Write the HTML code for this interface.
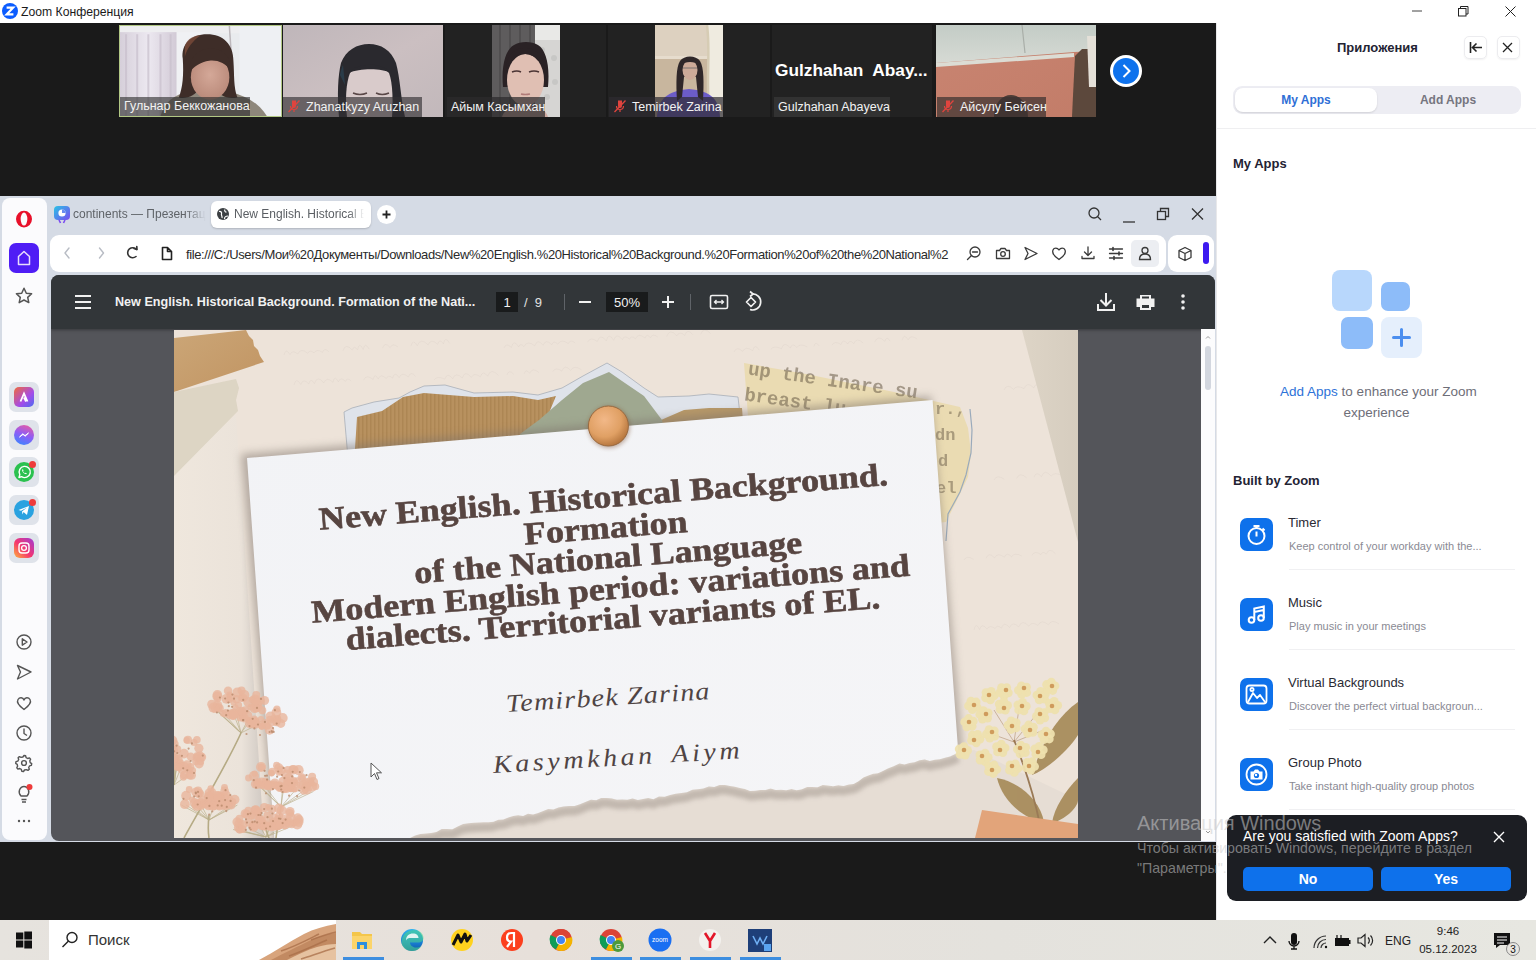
<!DOCTYPE html>
<html><head><meta charset="utf-8">
<style>
*{margin:0;padding:0;box-sizing:border-box}
html,body{width:1536px;height:960px;overflow:hidden;background:#1b1b1b;font-family:"Liberation Sans",sans-serif}
.a{position:absolute}
svg{position:absolute;overflow:visible}
#title{left:0;top:0;width:1536px;height:23px;background:#fff}
#dark{left:0;top:23px;width:1216px;height:173px;background:#1a1a1a}
#browser{left:0;top:196px;width:1216px;height:646px;background:#d5dbe5}
#bottomdark{left:0;top:842px;width:1216px;height:78px;background:#1a1a1a}
#panel{left:1216px;top:23px;width:320px;height:897px;background:#fff}
#taskbar{left:0;top:920px;width:1536px;height:40px;background:linear-gradient(90deg,#e6e3de 0%,#e7e0da 35%,#e4e2dd 65%,#e7e7e1 100%)}
.tile{position:absolute;top:26px;height:91px;background:#222;overflow:hidden}
.nm{position:absolute;left:2px;bottom:0;height:20px;background:rgba(40,40,40,.72);color:#f2f2f2;font-size:12.5px;line-height:20px;padding:0 4px;white-space:nowrap}
.mute{display:inline-block;width:14px;height:14px;vertical-align:-2px;margin-right:5px}
</style></head><body>
<!-- TITLE BAR -->
<div id="title" class="a">
  <div class="a" style="left:2px;top:3px;width:16px;height:16px;border-radius:50%;background:#0b5cff"></div>
  <svg style="left:2px;top:3px" width="16" height="16" viewBox="0 0 16 16"><path d="M4.6 4.6H11.2L4.6 11.4H11.4" fill="none" stroke="#fff" stroke-width="2.1" stroke-linejoin="miter"/></svg>
  <div class="a" style="left:21px;top:5px;font-size:12.2px;color:#1a1a1a;line-height:15px">Zoom Конференция</div>
  <svg style="left:1405px;top:0" width="120" height="23" viewBox="0 0 120 23">
    <path d="M7 11H17" stroke="#444" stroke-width="1"/>
    <rect x="53.5" y="8.5" width="7.5" height="7.5" fill="none" stroke="#222" stroke-width="1"/>
    <path d="M55.5 8.5V6.5H63V14H61" fill="none" stroke="#222" stroke-width="1"/>
    <path d="M100.5 6.5L110.5 16.5M110.5 6.5L100.5 16.5" stroke="#222" stroke-width="1"/>
  </svg>
</div>

<!-- DARK ZOOM STRIP -->
<div id="dark" class="a"></div>
<!-- tile1 -->
<div class="tile" style="left:119px;width:163px;top:25px;height:92px;background:#e8eaee;border:1px solid #b2c884">
 <svg style="left:0;top:0;filter:blur(.7px)" width="161" height="90" viewBox="0 0 159 88" preserveAspectRatio="none">
  <defs><linearGradient id="t1c" x1="0" x2="1"><stop offset="0" stop-color="#d6cfda"/><stop offset=".5" stop-color="#ece8f0"/><stop offset="1" stop-color="#d2cad6"/></linearGradient>
  <radialGradient id="t1f" cx=".5" cy=".45" r=".6"><stop offset="0" stop-color="#d4a898"/><stop offset="1" stop-color="#b88878"/></radialGradient></defs>
  <rect width="159" height="88" fill="#e9ebee"/>
  <rect x="0" y="0" width="159" height="7" fill="#eeeef0"/>
  <rect x="0" y="6" width="56" height="82" fill="url(#t1c)"/>
  <g stroke="#c8bfcc" stroke-width="2" opacity=".7"><path d="M6 8V88M17 8V88M28 8V88M40 8V88M50 8V88"/></g>
  <rect x="56" y="6" width="28" height="82" fill="#f0f1f4"/>
  <rect x="118" y="0" width="41" height="88" fill="#eef0f3"/>
  <path d="M108 0L114 88" stroke="#bdb8bc" stroke-width="1.5"/>
  <path d="M40 88C45 70 60 63 85 62C115 62 135 72 145 88Z" fill="#8e877b"/>
  <path d="M62 32C60 18 70 8 86 8C102 8 112 18 112 34C113 48 112 60 116 70C105 72 98 68 95 60L80 60C74 68 66 72 58 70C62 60 63 48 62 32Z" fill="#3e2d28"/>
  <path d="M64 20C66 12 74 9 80 9C72 14 66 22 64 30Z" fill="#7a4a38" opacity=".8"/>
  <ellipse cx="89" cy="50" rx="19" ry="22" fill="url(#t1f)"/>
  <path d="M68 46C68 30 78 22 90 22C102 22 110 30 110 44C104 36 96 33 88 34C80 35 72 40 68 46Z" fill="#3e2d28"/>
 </svg>
 <div class="nm" style="left:0;width:130px;height:19px;line-height:19px;background:rgba(45,45,45,.62)">Гульнар Беккожанова</div>
</div>
<!-- tile2 -->
<div class="tile" style="left:283px;width:160px;top:25px;height:92px;background:#c4b9bc">
 <svg style="left:0;top:0;filter:blur(.7px)" width="160" height="92" viewBox="0 0 160 92">
  <defs><linearGradient id="t2b" x1="0" y1="0" x2="1" y2="1"><stop offset="0" stop-color="#bfb6ba"/><stop offset=".5" stop-color="#cbbfc1"/><stop offset="1" stop-color="#c2b8bb"/></linearGradient></defs>
  <rect width="160" height="92" fill="url(#t2b)"/>
  <path d="M56 92C54 70 55 50 58 38C63 25 74 19 86 19C98 19 108 25 113 38C117 52 118 75 122 92Z" fill="#2a292e"/>
  <path d="M57 50C58 45 59 42 60 40L62 60Z" fill="#2c4a5c" opacity=".6"/>
  <path d="M64 92C62 75 63 58 67 48C74 41 98 40 106 48C110 58 110 78 109 92Z" fill="#d9cbcb"/>
  <path d="M66 48C72 38 100 36 107 48C100 43 76 43 66 48Z" fill="#2a292e"/>
  <path d="M70 68Q77 71 84 68M93 68Q99 71 106 68" stroke="#5a4848" stroke-width="1.4" fill="none"/>
 </svg>
 <div class="nm" style="left:0;width:139px;height:20px;background:rgba(50,48,50,.65)"><svg class="mute" style="position:relative;display:inline-block" width="14" height="14" viewBox="0 0 14 14"><path d="M5 1.5h4v5.5a2 2 0 0 1-4 0z" fill="#e0443e"/><path d="M3.5 7a3.5 3.5 0 0 0 7 0M7 10.5V13" stroke="#e0443e" fill="none" stroke-width="1.2"/><path d="M1.5 13L12.5 1.5" stroke="#e0443e" stroke-width="1.3"/></svg>Zhanatkyzy Aruzhan</div>
</div>
<!-- tile3 -->
<div class="tile" style="left:445px;width:161px;top:25px;height:92px;background:#222">
 <svg style="left:47px;top:0;filter:blur(.6px)" width="68" height="92" viewBox="0 0 68 92">
  <rect width="68" height="92" fill="#d6d5d3"/>
  <rect x="0" y="0" width="43" height="92" fill="#5e5c5d"/>
  <g stroke="#4e4c4d" stroke-width="2" opacity=".8"><path d="M8 0V92M18 0V92M28 0V92M38 0V92"/></g>
  <rect x="43" y="0" width="25" height="15" fill="#e9e9e7"/>
  <g fill="#c2c2c0" opacity=".7"><circle cx="50" cy="25" r="3"/><circle cx="62" cy="33" r="3"/><circle cx="52" cy="45" r="3"/><circle cx="63" cy="57" r="3"/><circle cx="55" cy="72" r="3"/></g>
  <path d="M11 62C9 40 14 24 22 20C28 16 40 16 46 20C54 25 58 40 56 62Z" fill="#2a2225"/>
  <ellipse cx="33.5" cy="55" rx="18.5" ry="26" fill="#e0bfb3"/>
  <path d="M14 46C14 30 22 23 33 23C44 23 52 30 53 46C50 36 44 30 33 29C22 30 17 36 14 46Z" fill="#2a2225"/>
  <path d="M20 47Q25 45 29 47M37 47Q42 45 47 47" stroke="#4a3434" stroke-width="1.6" fill="none"/>
  <path d="M29 69Q33 70 38 69" stroke="#b07b78" stroke-width="1.5" fill="none"/>
  <path d="M10 92C12 84 22 80 33 80C44 80 54 84 56 92Z" fill="#cfaba2"/>
 </svg>
 <div class="nm" style="left:2px;width:98px;height:20px;background:rgba(45,43,45,.72)">Айым Касымхан</div>
</div>
<!-- tile4 -->
<div class="tile" style="left:608px;width:162px;top:25px;height:92px;background:#222">
 <svg style="left:47px;top:0;filter:blur(.6px)" width="68" height="92" viewBox="0 0 68 92">
  <rect width="68" height="92" fill="#ddd1c0"/>
  <rect x="0" y="33" width="68" height="59" fill="#c8b69e"/>
  <rect x="0" y="31" width="68" height="3" fill="#e6dccd"/>
  <rect x="53" y="0" width="15" height="92" fill="#efebe0"/>
  <path d="M52 0C56 30 50 60 55 92" stroke="#d6ccb4" stroke-width="2.5" fill="none"/>
  <path d="M2 92C3 74 12 66 34 64C56 66 64 74 65 92Z" fill="#6c5cc8"/>
  <path d="M22 76C21 58 21 42 25 36C29 30 41 30 45 36C49 42 49 58 48 76L43 72L41 52L29 52L27 72Z" fill="#2f2729"/>
  <ellipse cx="35" cy="45" rx="7.5" ry="10" fill="#cdaa98"/>
  <path d="M26 40C28 32 42 31 44 40C40 36 30 36 26 40Z" fill="#2f2729"/>
  <path d="M28 43H42" stroke="#666" stroke-width=".8"/>
 </svg>
 <div class="nm" style="left:1px;width:114px;height:20px;background:rgba(45,43,48,.7)"><svg class="mute" style="position:relative;display:inline-block" width="14" height="14" viewBox="0 0 14 14"><path d="M5 1.5h4v5.5a2 2 0 0 1-4 0z" fill="#e0443e"/><path d="M3.5 7a3.5 3.5 0 0 0 7 0M7 10.5V13" stroke="#e0443e" fill="none" stroke-width="1.2"/><path d="M1.5 13L12.5 1.5" stroke="#e0443e" stroke-width="1.3"/></svg>Temirbek Zarina</div>
</div>
<!-- tile5 -->
<div class="tile" style="left:772px;width:160px;top:25px;height:92px;background:#222">
  <div class="a" style="left:3px;top:35px;width:160px;font-size:17.3px;font-weight:bold;color:#fff;white-space:nowrap">Gulzhahan&nbsp; Abay...</div>
  <div class="nm" style="left:2px;width:116px;height:20px;background:rgba(52,52,52,.9)">Gulzhahan Abayeva</div>
</div>
<!-- tile6 -->
<div class="tile" style="left:936px;width:160px;top:25px;height:92px;background:#c8836f">
 <svg style="left:0;top:0;filter:blur(.7px)" width="160" height="92" viewBox="0 0 160 92">
  <defs><linearGradient id="t6w" x1="0" y1="0" x2="1" y2="1"><stop offset="0" stop-color="#c98572"/><stop offset="1" stop-color="#c27c68"/></linearGradient>
  <linearGradient id="t6c" x1="0" y1="0" x2="0" y2="1"><stop offset="0" stop-color="#c3ccc6"/><stop offset="1" stop-color="#d6dad4"/></linearGradient></defs>
  <rect width="160" height="92" fill="url(#t6w)"/>
  <path d="M0 0H160V26L138 27L0 38Z" fill="url(#t6c)"/>
  <path d="M0 38L138 28L138 32L0 42Z" fill="#dcdcd4"/>
  <path d="M86 0L89 28" stroke="#a9aea8" stroke-width="1.2"/>
  <path d="M139 31L146 24H160V92H136C137 70 138 50 139 31Z" fill="#5c483c"/>
  <path d="M151 11H160V62H153Z" fill="#e4e0d8"/>
  <path d="M58 92C58 78 66 70 75 70C84 70 92 78 92 92Z" fill="#4c3c36"/>
 </svg>
 <div class="nm" style="left:1px;width:109px;height:20px;background:rgba(60,50,48,.72)"><svg class="mute" style="position:relative;display:inline-block" width="14" height="14" viewBox="0 0 14 14"><path d="M5 1.5h4v5.5a2 2 0 0 1-4 0z" fill="#e0443e"/><path d="M3.5 7a3.5 3.5 0 0 0 7 0M7 10.5V13" stroke="#e0443e" fill="none" stroke-width="1.2"/><path d="M1.5 13L12.5 1.5" stroke="#e0443e" stroke-width="1.3"/></svg>Айсулу Бейсен</div>
</div>
<!-- next btn -->
<div class="a" style="left:1110px;top:55px;width:32px;height:32px;border-radius:50%;background:#fff"></div>
<div class="a" style="left:1113px;top:58px;width:26px;height:26px;border-radius:50%;background:#0e72ed"></div>
<svg style="left:1110px;top:55px" width="32" height="32" viewBox="0 0 32 32"><path d="M13.5 10L19.5 16L13.5 22" fill="none" stroke="#fff" stroke-width="2"/></svg>

<!-- BROWSER -->
<div id="browser" class="a"></div>
<!-- sidebar -->
<div class="a" style="left:2px;top:198px;width:45px;height:642px;background:#fbfbfd;border-radius:8px"></div>
<svg style="left:14px;top:209px" width="20" height="20" viewBox="0 0 20 20"><path d="M10 1.8A8 8.3 0 1 1 10 18.4A8 8.3 0 1 1 10 1.8ZM10 3.6A3.3 6.4 0 1 0 10 16.6A3.3 6.4 0 1 0 10 3.6Z" fill="#e8102a" fill-rule="evenodd"/></svg>
<div class="a" style="left:9px;top:243px;width:30px;height:30px;border-radius:7px;background:#4f1df5"></div>
<svg style="left:9px;top:243px" width="30" height="30" viewBox="0 0 30 30"><path d="M9.5 21.5V13.5L15 8.5L20.5 13.5V21.5Z" fill="none" stroke="#e8defc" stroke-width="1.5" stroke-linejoin="round"/></svg>
<svg style="left:14px;top:286px" width="20" height="20" viewBox="0 0 20 20"><path d="M10 2.3l2.3 4.9 5.3.6-3.9 3.6 1.1 5.2L10 14l-4.8 2.6 1.1-5.2-3.9-3.6 5.3-.6z" fill="none" stroke="#555" stroke-width="1.5" stroke-linejoin="round"/></svg>
<!-- app icons -->
<div class="a" style="left:9px;top:382px;width:30px;height:30px;border-radius:7px;background:#dfe3ea"></div>
<div class="a" style="left:14px;top:387px;width:20px;height:20px;border-radius:5px;background:linear-gradient(135deg,#f06a3a,#a44be8 60%,#4a6cf0)"></div>
<svg style="left:14px;top:387px" width="20" height="20" viewBox="0 0 20 20"><path d="M6.5 14.5L10 6.5L13.5 14.5M10 10.5L12 14.5" fill="none" stroke="#fff" stroke-width="1.8"/></svg>
<div class="a" style="left:9px;top:420px;width:30px;height:30px;border-radius:7px;background:#dfe3ea"></div>
<div class="a" style="left:14px;top:425px;width:20px;height:20px;border-radius:50%;background:linear-gradient(200deg,#f35c9a,#8d5cf6 50%,#2f8cff)"></div>
<svg style="left:14px;top:425px" width="20" height="20" viewBox="0 0 20 20"><path d="M5.5 12L8.8 8.8L11 10.6L14.5 8L11.2 11.2L9 9.4Z" fill="#fff" stroke="#fff" stroke-width="1"/></svg>
<div class="a" style="left:9px;top:457px;width:30px;height:30px;border-radius:7px;background:#dfe3ea"></div>
<div class="a" style="left:14px;top:462px;width:20px;height:20px;border-radius:50%;background:#2bc14f"></div>
<svg style="left:14px;top:462px" width="20" height="20" viewBox="0 0 20 20"><path d="M5 15.5L5.8 12.6A5.6 5.6 0 1 1 7.6 14.6Z" fill="none" stroke="#fff" stroke-width="1.4" stroke-linejoin="round"/><path d="M8 7.8C8 10 10 12.2 12.3 12.3L12.8 11.3L11.6 10.7L11 11.2C10.2 10.8 9.4 10 9 9.2L9.5 8.6L9 7.3Z" fill="#fff"/></svg>
<div class="a" style="left:29px;top:461px;width:7px;height:7px;border-radius:50%;background:#ee3b3b"></div>
<div class="a" style="left:9px;top:495px;width:30px;height:30px;border-radius:7px;background:#dfe3ea"></div>
<div class="a" style="left:14px;top:500px;width:20px;height:20px;border-radius:50%;background:#2aa2e0"></div>
<svg style="left:14px;top:500px" width="20" height="20" viewBox="0 0 20 20"><path d="M4.5 10L15 6L13 15L9.5 12L8.5 14.5L8 11.5L13 7.5L7 10.8Z" fill="#fff"/></svg>
<div class="a" style="left:29px;top:499px;width:7px;height:7px;border-radius:50%;background:#ee3b3b"></div>
<div class="a" style="left:9px;top:533px;width:30px;height:30px;border-radius:7px;background:#dfe3ea"></div>
<div class="a" style="left:14px;top:538px;width:20px;height:20px;border-radius:6px;background:linear-gradient(45deg,#fdb33b,#f5366d 45%,#a03bd6)"></div>
<svg style="left:14px;top:538px" width="20" height="20" viewBox="0 0 20 20"><rect x="5" y="5" width="10" height="10" rx="3" fill="none" stroke="#fff" stroke-width="1.4"/><circle cx="10" cy="10" r="2.4" fill="none" stroke="#fff" stroke-width="1.3"/></svg>
<!-- bottom sidebar icons -->
<svg style="left:14px;top:632px" width="20" height="200" viewBox="0 0 20 200">
 <g fill="none" stroke="#555" stroke-width="1.4" stroke-linejoin="round">
  <circle cx="10" cy="10" r="7"/><path d="M8.3 6.8L13 10L8.3 13.2Z"/>
  <path d="M3.5 33.5L17 40L3.5 47L6.5 40Z"/>
  <path d="M10 77.5C4 73 2.5 70 4 67.5C5.5 65 9 65 10 68C11 65 14.5 65 16 67.5C17.5 70 16 73 10 77.5Z"/>
  <circle cx="10" cy="101" r="7"/><path d="M10 96.5V101.5L13 103.5"/>
  <circle cx="10" cy="131" r="2.4"/><path d="M10 123.5l1.6.3.5 1.8 1.6.9 1.8-.6 1.1 1.3-.8 1.7.4 1.8 1.5 1-.3 1.7-1.8.5-.9 1.6.6 1.8-1.3 1.1-1.7-.8-1.8.4-1 1.5-1.7-.3-.5-1.8-1.6-.9-1.8.6-1.1-1.3.8-1.7-.4-1.8-1.5-1 .3-1.7 1.8-.5.9-1.6-.6-1.8 1.3-1.1 1.7.8 1.8-.4z"/>
  <path d="M7.5 167.5H12.5M8 170H12M7 164C5 162 5 159.5 5.5 158C6.5 155.5 8 154.5 10 154.5C12 154.5 13.5 155.5 14.5 158C15 159.5 15 162 13 164Z"/>
 </g>
 <circle cx="15.5" cy="155" r="3" fill="#ee3b3b"/>
 <g fill="#555"><circle cx="5" cy="189" r="1.2"/><circle cx="10" cy="189" r="1.2"/><circle cx="15" cy="189" r="1.2"/></g>
</svg>
<!-- tabs -->
<div class="a" style="left:54px;top:206px;width:16px;height:14px;border-radius:4px;background:linear-gradient(135deg,#28c3e6,#7b4cf0)"></div>
<svg style="left:54px;top:206px" width="16" height="18" viewBox="0 0 16 18"><circle cx="8" cy="7" r="3.6" fill="#fff"/><path d="M8 7V3.4A3.6 3.6 0 0 1 11.6 7Z" fill="#6a8cf0"/><path d="M5 14L6.5 17M11 14L9.5 17" stroke="#7b4cf0" stroke-width="1.6"/></svg>
<div class="a" style="left:73px;top:207px;width:133px;height:16px;overflow:hidden;white-space:nowrap;font-size:12px;color:#5f6368;-webkit-mask-image:linear-gradient(90deg,#000 85%,transparent)">continents — Презентация</div>
<div class="a" style="left:211px;top:201px;width:160px;height:27px;border-radius:6px;background:#fff;box-shadow:0 1px 2px rgba(0,0,0,.18)"></div>
<svg style="left:216px;top:207px" width="14" height="14" viewBox="0 0 14 14"><circle cx="7" cy="7" r="6" fill="#3c4043"/><path d="M3 4.5C5 4 6 5.5 5.5 7C5 8.5 6.5 9 6 11M9 2.5C8 4 9.5 5 10.5 5.2M8.5 12C8.5 10 9.5 9 12 9" fill="none" stroke="#fff" stroke-width="1.2"/></svg>
<div class="a" style="left:234px;top:207px;width:130px;height:16px;overflow:hidden;white-space:nowrap;font-size:12px;color:#5a5e63;-webkit-mask-image:linear-gradient(90deg,#000 88%,transparent)">New English. Historical Background</div>
<div class="a" style="left:377px;top:205px;width:19px;height:19px;border-radius:50%;background:#fff"></div>
<svg style="left:377px;top:205px" width="19" height="19" viewBox="0 0 19 19"><path d="M9.5 5.5V13.5M5.5 9.5H13.5" stroke="#222" stroke-width="1.8"/></svg>
<!-- browser window controls -->
<svg style="left:1080px;top:200px" width="130" height="30" viewBox="0 0 130 30">
 <g fill="none" stroke="#333" stroke-width="1.3">
  <circle cx="14" cy="13" r="5"/><path d="M17.5 16.5L21 20"/>
  <path d="M43 22H55"/>
  <rect x="77.5" y="11.5" width="8" height="8"/><path d="M80.5 11.5V8.5H88.5V16.5H85.5"/>
  <path d="M112 8.5L123 19.5M123 8.5L112 19.5"/>
 </g>
</svg>
<!-- address bar -->
<div class="a" style="left:50px;top:235px;width:1116px;height:37px;border-radius:9px;background:#fff"></div>
<div class="a" style="left:1168px;top:235px;width:46px;height:37px;border-radius:9px;background:#fff"></div>
<svg style="left:55px;top:238px" width="140" height="30" viewBox="0 0 140 30">
 <g fill="none" stroke-width="1.4" stroke-linejoin="round" stroke-linecap="round">
  <path d="M14 10L10 15L14 20" stroke="#b8bcc4"/>
  <path d="M44.5 10L48.5 15L44.5 20" stroke="#b8bcc4"/>
  <path d="M81.5 11.5A5 5 0 1 0 81 18.5" stroke="#333" stroke-width="1.6"/>
  <path d="M79 10.5L82 11.5L81.8 8.5" stroke="#333" stroke-width="1.6"/>
  <path d="M107.5 9.5H112.5L116.5 13.5V21.5H107.5Z M112.5 9.5V13.5H116.5" stroke="#222" stroke-width="1.6"/>
 </g>
</svg>
<div class="a" style="left:186px;top:246.5px;font-size:13px;color:#2a2a2a;white-space:nowrap;letter-spacing:-0.4px">file:///C:/Users/Мои%20Документы/Downloads/New%20English.%20Historical%20Background.%20Formation%20of%20the%20National%2</div>
<svg style="left:960px;top:238px" width="260" height="30" viewBox="0 0 260 30">
 <g fill="none" stroke="#3a3a3a" stroke-width="1.3" stroke-linejoin="round" stroke-linecap="round">
  <circle cx="15" cy="14" r="5"/><path d="M12.5 14H17.5M11.5 17.5L7.5 21.5"/>
  <path d="M36.5 12.5H39.5L41 10.5H45L46.5 12.5H49.5V20.5H36.5Z"/><circle cx="43" cy="16" r="2.3"/>
  <path d="M65 9.5L77 15.5L65 21.5L68 15.5Z"/>
  <path d="M99 21.5C93 17.5 92 14.5 93 12C94 9.5 97.5 9.5 99 12C100.5 9.5 104 9.5 105 12C106 14.5 105 17.5 99 21.5Z"/>
  <path d="M128 9V17M124.5 14L128 17.5L131.5 14M122 18.5V20.5H134V18.5"/>
  <path d="M149.5 11H162.5M149.5 15.5H162.5M149.5 20H162.5"/><path d="M153 9.5V12.5M159 14V17M154 18.5V21.5" stroke-width="1.6"/>
 </g>
</svg>
<div class="a" style="left:1131px;top:240px;width:28px;height:27px;border-radius:5px;background:#eceef2"></div>
<svg style="left:1131px;top:240px" width="28" height="27" viewBox="0 0 28 27"><g fill="none" stroke="#3a3a3a" stroke-width="1.3"><circle cx="14" cy="10.5" r="3"/><path d="M8.5 19.5C8.5 15.5 11 14 14 14C17 14 19.5 15.5 19.5 19.5Z"/></g></svg>
<svg style="left:1174px;top:243px" width="22" height="22" viewBox="0 0 22 22"><g fill="none" stroke="#3a3a3a" stroke-width="1.3" stroke-linejoin="round"><path d="M11 4.5L17 7.5V14.5L11 17.5L5 14.5V7.5Z M5 7.5L11 10.5L17 7.5M11 10.5V17.5"/></g></svg>
<div class="a" style="left:1203px;top:242px;width:6px;height:22px;border-radius:3px;background:#3d1af0"></div>

<!-- PDF -->
<div class="a" style="left:51px;top:275px;width:1164px;height:566px;border-radius:8px 8px 0 8px;background:#54555a;overflow:hidden">
  <div class="a" style="left:0;top:0;width:1164px;height:54px;background:#323639;box-shadow:0 1px 3px rgba(0,0,0,.35)"></div>
</div>
<svg style="left:51px;top:275px" width="1164" height="54" viewBox="0 0 1164 54">
 <g fill="none" stroke="#f1f1f1" stroke-width="2">
  <path d="M24 21H40M24 27H40M24 33H40"/>
 </g>
</svg>
<div class="a" style="left:115px;top:295px;font-size:12.6px;font-weight:bold;color:#f1f1f1;white-space:nowrap">New English. Historical Background. Formation of the Nati...</div>
<div class="a" style="left:496px;top:292px;width:22px;height:20px;background:#191b1c"></div>
<div class="a" style="left:496px;top:295px;width:22px;text-align:center;font-size:13px;color:#f1f1f1">1</div>
<div class="a" style="left:524px;top:295px;font-size:13px;color:#e1e1e1;white-space:nowrap">/&nbsp; 9</div>
<div class="a" style="left:564px;top:294px;width:1px;height:16px;background:#5f6368"></div>
<div class="a" style="left:690px;top:294px;width:1px;height:16px;background:#5f6368"></div>
<div class="a" style="left:606px;top:292px;width:42px;height:20px;background:#191b1c"></div>
<div class="a" style="left:606px;top:295px;width:42px;text-align:center;font-size:13px;color:#f1f1f1">50%</div>
<svg style="left:570px;top:285px" width="200" height="34" viewBox="0 0 200 34">
 <g fill="none" stroke="#f1f1f1" stroke-width="2">
  <path d="M9 17H21"/>
  <path d="M92 17H104M98 11V23"/>
  <rect x="140.5" y="10.5" width="17" height="13" rx="1.5" stroke-width="1.6"/>
  <path d="M145 17H153M146.5 15L144.5 17L146.5 19M151.5 15L153.5 17L151.5 19" stroke-width="1.3"/>
 </g>
 <g fill="none" stroke="#f1f1f1" stroke-width="1.7" stroke-linejoin="round">
  <path d="M176.5 17L181 12.5L185.5 17L181 21.5Z"/>
  <path d="M182 9A8 8 0 1 1 180 24.5"/>
  <path d="M180 6.5L183 9L180 11.5"/>
 </g>
</svg>
<svg style="left:1090px;top:285px" width="110" height="34" viewBox="0 0 110 34">
 <g fill="none" stroke="#f1f1f1" stroke-width="2">
  <path d="M16 8V20M10.5 15L16 20.5L21.5 15M8 19V25H24V19"/>
 </g>
 <path d="M50 10H61V13.5H64.5V22H61V25H50V22H46.5V13.5H50Z M52 20V23H59V20Z M52 11.5V13.5H59V11.5Z" fill="#f1f1f1" fill-rule="evenodd"/>
 <g fill="#f1f1f1"><circle cx="93" cy="11" r="1.8"/><circle cx="93" cy="17" r="1.8"/><circle cx="93" cy="23" r="1.8"/></g>
</svg>
<!-- scrollbar -->
<div class="a" style="left:1201px;top:329px;width:14px;height:512px;background:#fcfcfd"></div>
<div class="a" style="left:1205px;top:346px;width:6px;height:44px;border-radius:3px;background:#d3d7df"></div>
<svg style="left:1201px;top:330px" width="14" height="511" viewBox="0 0 14 511"><path d="M5 8.5L7 6.5L9 8.5M5 501L7 503L9 501" fill="none" stroke="#999" stroke-width="1"/></svg>
<!-- SLIDE -->
<div id="slide" class="a" style="left:174px;top:330px;width:904px;height:508px;background:#ede3d9;overflow:hidden">
<svg style="left:0;top:0" width="904" height="508" viewBox="0 0 904 508">
 <defs>
  <linearGradient id="gR" x1="0" y1="0" x2="1" y2="0"><stop offset="0" stop-color="#ddd4c6"/><stop offset="1" stop-color="#d6cdbf"/></linearGradient>
  <linearGradient id="gL" x1="0" y1="0" x2="1" y2="0"><stop offset="0" stop-color="#efe7dd"/><stop offset=".75" stop-color="#ebe3da"/><stop offset="1" stop-color="#cfc8c2"/></linearGradient>
  <linearGradient id="gTape" x1="0" y1="0" x2="1" y2="1"><stop offset="0" stop-color="#cba677"/><stop offset="1" stop-color="#c19462"/></linearGradient>
  <pattern id="pStripe" width="4" height="10" patternUnits="userSpaceOnUse"><rect width="4" height="10" fill="#b8915f"/><rect width="1.5" height="10" fill="#a88250" opacity=".7"/></pattern><linearGradient id="gBrown" x1="0" y1="0" x2="0" y2="1"><stop offset="0" stop-color="#bd9866"/><stop offset="1" stop-color="#ab8656"/></linearGradient>
  <radialGradient id="gPin" cx=".4" cy=".35" r=".7"><stop offset="0" stop-color="#f2b888"/><stop offset=".6" stop-color="#e0a064"/><stop offset="1" stop-color="#b07038"/></radialGradient>
  <linearGradient id="gNote" x1="0" y1="0" x2="1" y2="1"><stop offset="0" stop-color="#f2f3f6"/><stop offset="1" stop-color="#f5f5f7"/></linearGradient>
  <linearGradient id="gShadow" x1="0" y1="0" x2="0" y2="1"><stop offset="0" stop-color="#b9b0a8"/><stop offset=".45" stop-color="#d9d0c7"/><stop offset="1" stop-color="#e8dfd6"/></linearGradient>
  <filter id="blur2"><feGaussianBlur stdDeviation="2"/></filter>
  <filter id="blur4"><feGaussianBlur stdDeviation="4"/></filter>
 </defs>
<!--SCRIB--><path d="M110.0 25.0 Q111.8 17.4 116.0 24.6 Q118.3 19.3 123.8 24.0 Q126.8 17.3 133.7 23.3 Q135.6 19.2 140.1 22.9 Q142.6 18.4 148.5 22.3 Q150.5 17.0 154.9 21.9 M168.9 20.9 Q171.7 12.3 178.3 20.2 Q179.8 14.5 183.5 19.9 Q185.2 11.0 189.2 19.5 Q190.9 11.3 195.1 19.1 M208.5 18.1 Q210.8 11.2 216.2 17.6 Q218.5 12.5 224.0 17.0 M236.9 16.1 Q238.9 8.1 243.3 15.7 Q246.6 7.0 254.1 14.9 Q257.0 7.8 263.7 14.3 Q265.4 7.8 269.4 13.9 Q271.3 5.1 275.6 13.4" fill="none" stroke="#8a7a70" stroke-width=".8" opacity=".08"/>
<path d="M330.0 18.0 Q332.2 12.0 337.4 17.5 Q339.6 8.4 344.7 17.0 Q346.3 12.4 349.9 16.6 Q353.2 9.9 360.8 15.8 Q363.3 7.9 369.1 15.3 Q371.7 8.3 377.7 14.7 Q379.6 9.7 383.8 14.2 Q387.0 8.3 394.3 13.5 Q396.4 8.8 401.2 13.0 M413.6 12.2 Q416.5 6.1 423.3 11.5 Q426.0 2.8 432.3 10.8 Q434.5 1.7 439.7 10.3 Q442.3 1.7 448.3 9.7 Q450.4 4.3 455.5 9.2 Q457.3 4.8 461.5 8.8 Q464.3 2.2 471.1 8.1 Q472.7 2.7 476.4 7.8 Q478.6 2.8 483.9 7.2 M492.6 6.6 Q495.7 -2.5 502.9 5.9 Q505.3 0.5 510.8 5.4 Q513.2 -2.5 518.9 4.8 M526.6 4.3 Q529.6 -3.9 536.6 3.6" fill="none" stroke="#8a7a70" stroke-width=".8" opacity=".08"/>
<path d="M560.0 22.0 Q562.6 15.7 568.6 21.4 Q571.6 15.6 578.7 20.7 Q580.7 12.7 585.3 20.2 M596.8 19.4 Q600.0 15.1 607.5 18.7 Q610.1 10.2 616.3 18.1 Q618.3 11.9 622.8 17.6 Q625.9 12.7 633.2 16.9 M640.0 16.4 Q641.5 10.1 645.1 16.0 M658.0 15.1 Q660.7 10.3 666.9 14.5 Q669.0 7.9 673.8 14.0 Q675.6 9.0 679.8 13.6 Q682.6 6.7 689.1 13.0 M700.7 12.2 Q703.8 4.1 710.9 11.4 Q712.5 5.0 716.0 11.1 M728.1 10.2 Q729.9 2.6 734.1 9.8 Q736.8 4.1 743.3 9.2 M752.3 8.5" fill="none" stroke="#8a7a70" stroke-width=".8" opacity=".08"/>
<path d="M120.0 55.0 Q122.1 46.4 126.8 54.5 Q129.2 47.6 134.8 54.0 Q136.5 46.8 140.4 53.6 Q143.2 44.5 149.8 52.9 Q152.6 46.1 159.0 52.3 Q160.6 44.1 164.3 51.9 Q166.5 46.2 171.5 51.4 Q173.1 46.9 177.1 51.0 M189.6 50.1 Q192.4 43.7 199.1 49.5 Q200.6 42.1 204.2 49.1 Q206.6 43.0 212.3 48.5 Q214.2 44.2 218.6 48.1 Q220.6 40.4 225.1 47.7 Q227.9 41.2 234.4 47.0 Q236.6 40.4 241.7 46.5" fill="none" stroke="#8a7a70" stroke-width=".8" opacity=".08"/>
<path d="M260.0 50.0 Q263.2 45.3 270.8 49.2 Q273.1 41.5 278.7 48.7 Q281.6 41.4 288.3 48.0 Q291.0 39.5 297.3 47.4 Q300.0 42.0 306.4 46.8 Q308.6 39.5 313.7 46.2 Q316.9 37.1 324.5 45.5 M332.9 44.9 Q335.0 38.8 339.8 44.4 M350.2 43.7 Q351.8 38.1 355.7 43.3 Q358.5 36.8 365.1 42.7 M378.7 41.7 Q381.5 36.5 387.9 41.1 Q390.5 33.5 396.7 40.4 Q399.9 34.6 407.4 39.7" fill="none" stroke="#8a7a70" stroke-width=".8" opacity=".08"/>
<path d="M700.0 120.0 Q703.0 115.0 710.0 119.3 Q711.9 112.2 716.2 118.9 Q718.4 110.0 723.5 118.4 Q725.8 111.1 731.1 117.8 Q732.9 111.8 737.1 117.4 Q739.0 108.5 743.2 117.0 M755.7 116.1 Q758.9 108.4 766.3 115.4 M776.3 114.7 Q777.8 107.5 781.5 114.3 Q783.4 110.1 787.9 113.9 Q789.6 108.2 793.5 113.5" fill="none" stroke="#8a7a70" stroke-width=".8" opacity=".08"/>
<path d="M820.0 150.0 Q823.1 143.9 830.3 149.3 M842.6 148.4 Q845.6 141.6 852.6 147.7 M860.0 147.2 Q862.3 140.3 867.4 146.7 Q870.4 138.3 877.2 146.0 Q880.3 141.7 887.5 145.3 Q889.1 136.7 893.0 144.9" fill="none" stroke="#8a7a70" stroke-width=".8" opacity=".08"/>
<path d="M790.0 230.0 Q792.9 224.9 799.5 229.3 M812.0 228.5 Q814.6 221.2 820.6 227.9 Q823.6 222.0 830.4 227.2 Q832.5 221.5 837.5 226.7 Q840.6 222.1 847.8 226.0 M857.9 225.3 Q860.6 220.1 867.0 224.6 Q868.6 220.3 872.3 224.2 Q875.0 216.8 881.4 223.6" fill="none" stroke="#8a7a70" stroke-width=".8" opacity=".08"/>
<path d="M800.0 300.0 Q801.7 291.2 805.6 299.6 Q807.8 292.0 813.0 299.1 Q815.5 294.5 821.2 298.5 Q823.1 294.2 827.4 298.1 Q829.9 290.8 835.6 297.5 Q838.4 290.8 844.8 296.9 Q847.9 288.6 854.9 296.2 Q857.6 290.9 864.0 295.5 Q867.1 288.6 874.4 294.8 Q877.6 288.6 885.2 294.0" fill="none" stroke="#8a7a70" stroke-width=".8" opacity=".08"/>
<path d="M560.0 492.0 Q563.2 483.8 570.6 491.3 M579.4 490.6 Q582.0 483.4 588.0 490.0 Q590.7 485.0 596.9 489.4 Q599.4 480.8 605.1 488.8 Q608.4 481.8 616.1 488.1 Q618.9 479.5 625.5 487.4 Q627.1 481.3 631.0 487.0 Q633.4 478.8 639.2 486.5 Q640.9 482.2 645.0 486.1 Q647.5 481.8 653.4 485.5 Q655.3 480.8 659.7 485.0 Q662.1 476.4 667.8 484.5 Q669.5 479.1 673.5 484.1 Q676.2 476.0 682.3 483.4 Q685.0 478.0 691.2 482.8 Q693.4 476.2 698.5 482.3 Q700.9 475.9 706.7 481.7 M719.2 480.9" fill="none" stroke="#8a7a70" stroke-width=".8" opacity=".08"/>
<path d="M300.0 515.0 Q302.5 506.8 308.5 514.4 Q311.3 505.2 317.9 513.8 Q320.1 509.6 325.2 513.2 Q327.7 506.2 333.7 512.6 Q335.5 507.4 339.8 512.2 Q342.8 505.6 349.7 511.5 M358.6 510.9 Q361.6 504.2 368.6 510.2 Q370.8 502.9 375.9 509.7 Q378.6 501.2 385.0 509.1 Q387.2 503.7 392.3 508.5 Q395.2 499.7 402.0 507.9 Q405.0 499.2 412.0 507.2 M420.5 506.6" fill="none" stroke="#8a7a70" stroke-width=".8" opacity=".08"/>
<path d="M660.0 505.0 Q662.6 500.1 668.8 504.4 Q670.8 496.8 675.4 503.9 Q677.2 498.8 681.6 503.5 Q684.4 498.2 690.9 502.8 Q693.0 495.4 697.9 502.4 Q699.7 497.5 704.0 501.9 M715.6 501.1 Q717.8 496.3 723.0 500.6 Q725.7 496.3 732.0 500.0 Q734.5 493.6 740.5 499.4 Q743.7 493.3 751.2 498.6 Q753.9 492.6 760.0 498.0 Q762.9 490.6 769.5 497.3 Q772.0 492.1 777.6 496.8 Q779.1 489.5 782.7 496.4" fill="none" stroke="#8a7a70" stroke-width=".8" opacity=".08"/>
<path d="M10.0 170.0 Q11.9 162.9 16.3 169.6 Q18.0 163.0 21.8 169.2 Q24.8 163.3 31.6 168.5 Q33.5 164.1 37.9 168.1 Q39.6 160.8 43.8 167.6 Q45.7 162.9 50.1 167.2 Q51.8 161.1 55.8 166.8 Q57.6 159.2 62.0 166.4" fill="none" stroke="#8a7a70" stroke-width=".8" opacity=".08"/>
<path d="M10.0 240.0 Q11.6 234.7 15.5 239.6 Q17.2 234.5 21.1 239.2 Q24.0 232.4 30.9 238.5 Q32.5 232.9 36.0 238.2 Q39.1 232.2 46.4 237.5 Q48.0 230.9 51.6 237.1" fill="none" stroke="#8a7a70" stroke-width=".8" opacity=".08"/>
<path d="M830.0 60.0 Q832.9 52.9 839.6 59.3 Q842.8 54.7 850.1 58.6 Q853.0 50.8 859.8 57.9 Q861.6 52.1 865.7 57.5 Q868.4 51.4 874.7 56.9 Q876.2 51.3 880.0 56.5 M888.5 55.9 Q891.5 47.9 898.3 55.2 M906.7 54.6" fill="none" stroke="#8a7a70" stroke-width=".8" opacity=".08"/><!--SCRIBEND-->
 <!-- right darker paper -->
 <path d="M848 0H904V212Z" fill="url(#gR)"/>
 <!-- left strip paper -->
 <path d="M0 140L62 85L90 508H0Z" fill="url(#gL)"/>
 <!-- brown tape -->
 <path d="M0 8L72 0L75 6L79 10L80 16L84 20L86 26L90 32L0 62Z" fill="url(#gTape)"/>
 <path d="M0 62L62 49L65 58L62 70L64 81L0 146Z" fill="#dad3c1" opacity=".9"/>
 <!-- torn papers behind note -->
 <path d="M170 82L178 78L200 72L225 68L236 62L250 56L271 55L300 63L339 62L364 65L388 58L409 46L433 33L448 42L470 58L484 67L515 66L535 64L564 67L570 120L175 140Z" fill="#dfe3ea" stroke="#a8aeb8" stroke-width=".8"/>
 <path d="M183 87L208 81L229 67L250 63L300 67L339 66L364 70L382 66L370 95L348 110L180 135Z" fill="url(#pStripe)"/>
 <path d="M487 90L510 80L535 78L568 78L570 105L490 110Z" fill="#b79868"/>
 <path d="M346 104L365 90L388 70L409 53L435 42L448 51L470 66L488 90L492 110L346 115Z" fill="#9fa890"/>
 <!-- newspaper -->
 <path d="M570 33L632 44L720 62L786 77L794 98L797 123L794 147L782 172L772 192L700 200L575 100Z" fill="#eadbb2"/>
 <path d="M796 79L798 100L797 123L792 145L786 162L774 184L772 211" fill="none" stroke="#9aaabb" stroke-width="1.2"/>
 <g font-family="Liberation Mono" font-weight="bold" font-size="19" fill="#6a5c48" opacity=".55" transform="rotate(8 570 40)">
  <text x="574" y="44">up the Inare su</text>
  <text x="574" y="70">breast lu    or,</text>
 </g>
 <g font-family="Liberation Mono" font-weight="bold" font-size="17" fill="#6a5c48" opacity=".5">
  <text x="761" y="84">r.,</text>
  <text x="761" y="110">dn</text>
  <text x="764" y="136">d</text>
  <text x="762" y="163">el</text>
 </g>
 <!-- note shadow -->
 <path d="M67 124L757 66L789 424L100 514Z" fill="#7d726b" opacity=".5" filter="url(#blur4)"/>
 <!-- torn shadow band below note -->
 <path d="M784.3 422.8L784.3 422.8 L776.0 426.5 L771.0 427.7 L765.9 429.2 L760.9 429.8 L755.8 431.0 L750.8 429.6 L745.7 430.2 L740.6 432.3 L735.6 433.0 L730.5 434.4 L725.5 433.4 L719.6 436.3 L713.8 438.5 L708.9 440.9 L704.0 443.2 L699.2 443.8 L694.3 445.5 L689.4 447.5 L684.5 451.3 L679.6 453.9 L674.8 454.6 L669.5 456.0 L664.3 455.2 L659.1 456.2 L653.9 455.6 L648.7 455.1 L643.5 457.3 L638.3 457.0 L633.1 457.0 L627.9 459.3 L622.7 460.2 L617.5 459.0 L612.3 460.2 L607.1 459.8 L601.8 459.9 L596.6 458.6 L591.4 459.9 L586.2 460.0 L581.0 460.8 L576.0 460.9 L570.9 459.1 L565.9 458.1 L560.9 456.8 L555.9 455.9 L550.8 455.0 L545.8 455.1 L540.3 456.9 L534.9 456.6 L529.4 458.6 L524.0 459.2 L518.5 459.8 L512.9 462.2 L507.3 463.1 L501.7 463.7 L496.2 464.9 L490.6 466.8 L485.0 466.5 L479.4 469.3 L474.2 467.9 L469.0 469.1 L463.8 470.1 L458.6 468.5 L453.4 469.8 L448.2 469.4 L443.0 469.8 L437.8 468.6 L432.6 468.0 L427.4 468.1 L422.2 470.3 L417.0 469.7 L411.5 471.9 L406.0 474.2 L400.6 476.1 L395.1 476.0 L389.6 476.5 L384.5 477.6 L379.4 479.4 L374.3 479.1 L369.3 481.1 L364.2 482.9 L359.1 484.5 L354.0 483.7 L349.1 486.0 L344.1 485.3 L339.2 486.0 L334.3 487.5 L329.3 489.6 L324.4 489.7 L319.5 491.7 L314.5 492.2 L309.6 492.2 L304.7 492.6 L299.8 492.8 L294.4 493.2 L289.1 494.0 L283.7 496.4 L278.4 499.2 L273.0 498.9 L267.7 498.9 L262.4 501.9 L257.0 502.9 L251.7 503.5 L246.3 503.9 L241.0 505.5 L236.0 507.9 L231.0 508.9 L226.0 510.0L226 530L904 530L904 470L800 420Z" fill="#e6ddd4"/>
 <path d="M784.3 427.8 L776.0 431.5 L771.0 432.7 L765.9 434.2 L760.9 434.8 L755.8 436.0 L750.8 434.6 L745.7 435.2 L740.6 437.3 L735.6 438.0 L730.5 439.4 L725.5 438.4 L719.6 441.3 L713.8 443.5 L708.9 445.9 L704.0 448.2 L699.2 448.8 L694.3 450.5 L689.4 452.5 L684.5 456.3 L679.6 458.9 L674.8 459.6 L669.5 461.0 L664.3 460.2 L659.1 461.2 L653.9 460.6 L648.7 460.1 L643.5 462.3 L638.3 462.0 L633.1 462.0 L627.9 464.3 L622.7 465.2 L617.5 464.0 L612.3 465.2 L607.1 464.8 L601.8 464.9 L596.6 463.6 L591.4 464.9 L586.2 465.0 L581.0 465.8 L576.0 465.9 L570.9 464.1 L565.9 463.1 L560.9 461.8 L555.9 460.9 L550.8 460.0 L545.8 460.1 L540.3 461.9 L534.9 461.6 L529.4 463.6 L524.0 464.2 L518.5 464.8 L512.9 467.2 L507.3 468.1 L501.7 468.7 L496.2 469.9 L490.6 471.8 L485.0 471.5 L479.4 474.3 L474.2 472.9 L469.0 474.1 L463.8 475.1 L458.6 473.5 L453.4 474.8 L448.2 474.4 L443.0 474.8 L437.8 473.6 L432.6 473.0 L427.4 473.1 L422.2 475.3 L417.0 474.7 L411.5 476.9 L406.0 479.2 L400.6 481.1 L395.1 481.0 L389.6 481.5 L384.5 482.6 L379.4 484.4 L374.3 484.1 L369.3 486.1 L364.2 487.9 L359.1 489.5 L354.0 488.7 L349.1 491.0 L344.1 490.3 L339.2 491.0 L334.3 492.5 L329.3 494.6 L324.4 494.7 L319.5 496.7 L314.5 497.2 L309.6 497.2 L304.7 497.6 L299.8 497.8 L294.4 498.2 L289.1 499.0 L283.7 501.4 L278.4 504.2 L273.0 503.9 L267.7 503.9 L262.4 506.9 L257.0 507.9 L251.7 508.5 L246.3 508.9 L241.0 510.5 L236.0 512.9 L231.0 513.9 L226.0 515.0" fill="none" stroke="#b9afa6" stroke-width="9" opacity=".8" filter="url(#blur2)"/>
 <!-- note -->
 <path d="M73 128L758.6 70L784.3 422.8 L776.0 426.5 L771.0 427.7 L765.9 429.2 L760.9 429.8 L755.8 431.0 L750.8 429.6 L745.7 430.2 L740.6 432.3 L735.6 433.0 L730.5 434.4 L725.5 433.4 L719.6 436.3 L713.8 438.5 L708.9 440.9 L704.0 443.2 L699.2 443.8 L694.3 445.5 L689.4 447.5 L684.5 451.3 L679.6 453.9 L674.8 454.6 L669.5 456.0 L664.3 455.2 L659.1 456.2 L653.9 455.6 L648.7 455.1 L643.5 457.3 L638.3 457.0 L633.1 457.0 L627.9 459.3 L622.7 460.2 L617.5 459.0 L612.3 460.2 L607.1 459.8 L601.8 459.9 L596.6 458.6 L591.4 459.9 L586.2 460.0 L581.0 460.8 L576.0 460.9 L570.9 459.1 L565.9 458.1 L560.9 456.8 L555.9 455.9 L550.8 455.0 L545.8 455.1 L540.3 456.9 L534.9 456.6 L529.4 458.6 L524.0 459.2 L518.5 459.8 L512.9 462.2 L507.3 463.1 L501.7 463.7 L496.2 464.9 L490.6 466.8 L485.0 466.5 L479.4 469.3 L474.2 467.9 L469.0 469.1 L463.8 470.1 L458.6 468.5 L453.4 469.8 L448.2 469.4 L443.0 469.8 L437.8 468.6 L432.6 468.0 L427.4 468.1 L422.2 470.3 L417.0 469.7 L411.5 471.9 L406.0 474.2 L400.6 476.1 L395.1 476.0 L389.6 476.5 L384.5 477.6 L379.4 479.4 L374.3 479.1 L369.3 481.1 L364.2 482.9 L359.1 484.5 L354.0 483.7 L349.1 486.0 L344.1 485.3 L339.2 486.0 L334.3 487.5 L329.3 489.6 L324.4 489.7 L319.5 491.7 L314.5 492.2 L309.6 492.2 L304.7 492.6 L299.8 492.8 L294.4 493.2 L289.1 494.0 L283.7 496.4 L278.4 499.2 L273.0 498.9 L267.7 498.9 L262.4 501.9 L257.0 502.9 L251.7 503.5 L246.3 503.9 L241.0 505.5 L236.0 507.9 L231.0 508.9 L226.0 510.0L100.5 510Z" fill="url(#gNote)"/>
 <!-- pin -->
 <circle cx="435" cy="97" r="21" fill="#7a5030" opacity=".45" filter="url(#blur2)"/>
 <circle cx="434.4" cy="96" r="20" fill="url(#gPin)" stroke="#9a6a40" stroke-width="1"/>
<!--PINK-->
<g fill="none" stroke="#b5aa84" stroke-width="1.6"><path d="M67 403C50 440 25 480 10 508"/><path d="M107 477C105 490 103 500 102 508"/><path d="M35 485C34 495 34 502 35 508"/><path d="M92 500L95 508"/></g>
<path d="M67.0 403.0L60.4 386.0" stroke="#b8ad88" stroke-width=".8" fill="none" opacity=".8"/>
<path d="M67.0 403.0L48.1 381.5" stroke="#b8ad88" stroke-width=".8" fill="none" opacity=".8"/>
<path d="M67.0 403.0L83.8 394.5" stroke="#b8ad88" stroke-width=".8" fill="none" opacity=".8"/>
<path d="M67.0 403.0L42.5 379.5" stroke="#b8ad88" stroke-width=".8" fill="none" opacity=".8"/>
<path d="M67.0 403.0L75.6 391.5" stroke="#b8ad88" stroke-width=".8" fill="none" opacity=".8"/>
<path d="M67.0 403.0L63.4 387.1" stroke="#b8ad88" stroke-width=".8" fill="none" opacity=".8"/>
<path d="M67.0 403.0L41.4 379.1" stroke="#b8ad88" stroke-width=".8" fill="none" opacity=".8"/>
<path d="M67.0 403.0L73.5 390.8" stroke="#b8ad88" stroke-width=".8" fill="none" opacity=".8"/>
<path d="M67.0 403.0L40.0 378.6" stroke="#b8ad88" stroke-width=".8" fill="none" opacity=".8"/>
<circle cx="63.6" cy="383.1" r="3.2" fill="#e8b59c" opacity=".8"/>
<circle cx="42.6" cy="377.6" r="3.5" fill="#e8b59c" opacity=".8"/>
<circle cx="54.1" cy="360.7" r="4.3" fill="#e8b59c" opacity=".8"/>
<circle cx="43.5" cy="377.6" r="4.9" fill="#e8b59c" opacity=".8"/>
<circle cx="68.2" cy="386.8" r="3.7" fill="#e8b59c" opacity=".8"/>
<circle cx="82.1" cy="378.2" r="4.3" fill="#e8b59c" opacity=".8"/>
<circle cx="62.5" cy="369.2" r="4.2" fill="#e8b59c" opacity=".8"/>
<circle cx="80.3" cy="388.9" r="3.5" fill="#e8b59c" opacity=".8"/>
<circle cx="67.6" cy="368.2" r="3.7" fill="#e8b59c" opacity=".8"/>
<circle cx="54.9" cy="369.4" r="3.7" fill="#e8b59c" opacity=".8"/>
<circle cx="87.3" cy="370.4" r="3.5" fill="#e8b59c" opacity=".8"/>
<circle cx="52.4" cy="368.8" r="4.9" fill="#e8b59c" opacity=".8"/>
<circle cx="74.5" cy="372.1" r="5.2" fill="#e8b59c" opacity=".8"/>
<circle cx="87.7" cy="396.6" r="3.3" fill="#e8b59c" opacity=".8"/>
<circle cx="65.8" cy="381.7" r="4.5" fill="#e8b59c" opacity=".8"/>
<circle cx="81.1" cy="369.3" r="4.9" fill="#e8b59c" opacity=".8"/>
<circle cx="59.3" cy="385.5" r="4.3" fill="#e8b59c" opacity=".8"/>
<circle cx="39.6" cy="377.7" r="5.1" fill="#e8b59c" opacity=".8"/>
<circle cx="43.3" cy="376.3" r="3.1" fill="#e8b59c" opacity=".8"/>
<circle cx="70.2" cy="365.0" r="5.2" fill="#e8b59c" opacity=".8"/>
<circle cx="84.9" cy="377.1" r="3.8" fill="#e8b59c" opacity=".8"/>
<circle cx="71.4" cy="380.3" r="4.0" fill="#e8b59c" opacity=".8"/>
<circle cx="76.8" cy="392.3" r="3.1" fill="#e8b59c" opacity=".8"/>
<circle cx="77.2" cy="377.1" r="3.5" fill="#e8b59c" opacity=".8"/>
<circle cx="45.8" cy="378.5" r="4.0" fill="#e8b59c" opacity=".8"/>
<circle cx="43.2" cy="366.4" r="4.8" fill="#e8b59c" opacity=".8"/>
<circle cx="88.4" cy="380.3" r="3.9" fill="#e8b59c" opacity=".8"/>
<circle cx="49.2" cy="383.4" r="3.3" fill="#e8b59c" opacity=".8"/>
<circle cx="79.1" cy="391.3" r="4.1" fill="#e8b59c" opacity=".8"/>
<circle cx="59.5" cy="372.7" r="3.0" fill="#e8b59c" opacity=".8"/>
<circle cx="51.8" cy="383.2" r="4.2" fill="#e8b59c" opacity=".8"/>
<circle cx="103.2" cy="389.3" r="4.1" fill="#e8b59c" opacity=".8"/>
<circle cx="55.5" cy="364.7" r="3.1" fill="#e8b59c" opacity=".8"/>
<circle cx="102.4" cy="382.5" r="4.9" fill="#e8b59c" opacity=".8"/>
<circle cx="84.1" cy="374.0" r="3.9" fill="#e8b59c" opacity=".8"/>
<circle cx="94.2" cy="396.1" r="3.1" fill="#e8b59c" opacity=".8"/>
<circle cx="74.9" cy="390.2" r="3.1" fill="#e8b59c" opacity=".8"/>
<circle cx="86.9" cy="389.1" r="3.2" fill="#e8b59c" opacity=".8"/>
<circle cx="68.4" cy="385.1" r="4.9" fill="#e8b59c" opacity=".8"/>
<circle cx="64.5" cy="375.0" r="3.6" fill="#e8b59c" opacity=".8"/>
<circle cx="59.1" cy="383.6" r="4.9" fill="#e8b59c" opacity=".8"/>
<circle cx="97.6" cy="392.3" r="4.1" fill="#e8b59c" opacity=".8"/>
<circle cx="81.6" cy="391.0" r="3.8" fill="#e8b59c" opacity=".8"/>
<circle cx="68.5" cy="387.1" r="3.1" fill="#e8b59c" opacity=".8"/>
<circle cx="99.4" cy="388.4" r="3.3" fill="#e8b59c" opacity=".8"/>
<circle cx="67.7" cy="381.0" r="4.2" fill="#e8b59c" opacity=".8"/>
<circle cx="106.8" cy="393.4" r="4.5" fill="#e8b59c" opacity=".8"/>
<circle cx="70.0" cy="387.7" r="4.7" fill="#e8b59c" opacity=".8"/>
<circle cx="43.5" cy="369.1" r="3.7" fill="#e8b59c" opacity=".8"/>
<circle cx="75.8" cy="393.2" r="4.9" fill="#e8b59c" opacity=".8"/>
<circle cx="90.5" cy="370.5" r="4.6" fill="#e8b59c" opacity=".8"/>
<circle cx="75.0" cy="390.3" r="3.1" fill="#e8b59c" opacity=".8"/>
<circle cx="90.9" cy="392.7" r="3.6" fill="#e8b59c" opacity=".8"/>
<circle cx="67.5" cy="360.6" r="4.0" fill="#e8b59c" opacity=".8"/>
<circle cx="108.6" cy="388.0" r="5.1" fill="#e8b59c" opacity=".8"/>
<circle cx="60.3" cy="384.4" r="3.4" fill="#e8b59c" opacity=".8"/>
<circle cx="78.5" cy="393.8" r="4.8" fill="#e8b59c" opacity=".8"/>
<circle cx="43.6" cy="375.7" r="4.8" fill="#e8b59c" opacity=".8"/>
<circle cx="95.5" cy="400.0" r="4.7" fill="#e8b59c" opacity=".8"/>
<circle cx="78.2" cy="369.7" r="3.4" fill="#e8b59c" opacity=".8"/>
<circle cx="82.2" cy="374.3" r="4.8" fill="#e8b59c" opacity=".8"/>
<circle cx="95.9" cy="389.7" r="3.9" fill="#e8b59c" opacity=".8"/>
<circle cx="103.8" cy="388.7" r="3.4" fill="#e8b59c" opacity=".8"/>
<circle cx="80.6" cy="393.3" r="5.0" fill="#e8b59c" opacity=".8"/>
<circle cx="80.4" cy="378.3" r="4.8" fill="#e8b59c" opacity=".8"/>
<circle cx="102.5" cy="392.4" r="3.8" fill="#e8b59c" opacity=".8"/>
<circle cx="61.5" cy="377.3" r="3.0" fill="#e8b59c" opacity=".8"/>
<circle cx="102.4" cy="391.3" r="4.2" fill="#e8b59c" opacity=".8"/>
<circle cx="96.5" cy="386.3" r="4.9" fill="#e8b59c" opacity=".8"/>
<circle cx="83.6" cy="378.3" r="3.6" fill="#e8b59c" opacity=".8"/>
<circle cx="66.2" cy="388.0" r="3.6" fill="#e8b59c" opacity=".8"/>
<circle cx="60.4" cy="383.5" r="5.0" fill="#e8b59c" opacity=".8"/>
<circle cx="56.2" cy="384.4" r="5.0" fill="#e8b59c" opacity=".8"/>
<circle cx="41.0" cy="378.5" r="4.2" fill="#e8b59c" opacity=".8"/>
<circle cx="68.3" cy="381.8" r="4.0" fill="#e8b59c" opacity=".8"/>
<circle cx="73.5" cy="385.5" r="4.8" fill="#e8b59c" opacity=".8"/>
<circle cx="82.2" cy="394.4" r="4.2" fill="#e8b59c" opacity=".8"/>
<circle cx="59.1" cy="385.3" r="4.7" fill="#e8b59c" opacity=".8"/>
<circle cx="92.4" cy="396.2" r="3.6" fill="#e8b59c" opacity=".8"/>
<circle cx="81.9" cy="370.7" r="4.2" fill="#e8b59c" opacity=".8"/>
<circle cx="82.3" cy="365.1" r="4.0" fill="#e8b59c" opacity=".8"/>
<circle cx="57.2" cy="367.4" r="4.1" fill="#e8b59c" opacity=".8"/>
<circle cx="69.3" cy="367.9" r="4.2" fill="#e8b59c" opacity=".8"/>
<circle cx="37.7" cy="374.3" r="4.5" fill="#e8b59c" opacity=".8"/>
<circle cx="102.9" cy="379.0" r="3.6" fill="#e8b59c" opacity=".8"/>
<circle cx="43.4" cy="364.9" r="4.8" fill="#e8b59c" opacity=".8"/>
<circle cx="79.1" cy="392.4" r="4.0" fill="#e8b59c" opacity=".8"/>
<circle cx="87.1" cy="394.2" r="3.2" fill="#e8b59c" opacity=".8"/>
<circle cx="63.5" cy="362.4" r="5.0" fill="#e8b59c" opacity=".8"/>
<circle cx="87.9" cy="396.2" r="3.3" fill="#e8b59c" opacity=".8"/>
<circle cx="100.9" cy="380.2" r="1.1" fill="#b98a6c" opacity=".8"/>
<circle cx="72.5" cy="404.0" r="1.1" fill="#b98a6c" opacity=".8"/>
<circle cx="52.2" cy="385.2" r="1.1" fill="#b98a6c" opacity=".8"/>
<circle cx="102.7" cy="393.6" r="1.1" fill="#b98a6c" opacity=".8"/>
<circle cx="80.4" cy="398.4" r="1.1" fill="#b98a6c" opacity=".8"/>
<circle cx="54.8" cy="376.2" r="1.1" fill="#b98a6c" opacity=".8"/>
<circle cx="75.5" cy="396.1" r="1.1" fill="#b98a6c" opacity=".8"/>
<circle cx="73.1" cy="381.2" r="1.1" fill="#b98a6c" opacity=".8"/>
<circle cx="54.4" cy="372.6" r="1.1" fill="#b98a6c" opacity=".8"/>
<circle cx="90.9" cy="391.9" r="1.1" fill="#b98a6c" opacity=".8"/>
<circle cx="60.0" cy="368.7" r="1.1" fill="#b98a6c" opacity=".8"/>
<circle cx="99.7" cy="401.9" r="1.1" fill="#b98a6c" opacity=".8"/>
<circle cx="87.0" cy="368.9" r="1.1" fill="#b98a6c" opacity=".8"/>
<circle cx="84.0" cy="394.6" r="1.1" fill="#b98a6c" opacity=".8"/>
<circle cx="99.0" cy="398.0" r="1.1" fill="#b98a6c" opacity=".8"/>
<circle cx="69.1" cy="390.1" r="1.1" fill="#b98a6c" opacity=".8"/>
<circle cx="42.9" cy="382.5" r="1.1" fill="#b98a6c" opacity=".8"/>
<circle cx="83.0" cy="377.9" r="1.1" fill="#b98a6c" opacity=".8"/>
<circle cx="86.0" cy="405.0" r="1.1" fill="#b98a6c" opacity=".8"/>
<circle cx="51.1" cy="368.5" r="1.1" fill="#b98a6c" opacity=".8"/>
<circle cx="78.7" cy="388.8" r="1.1" fill="#b98a6c" opacity=".8"/>
<circle cx="69.2" cy="369.9" r="1.1" fill="#b98a6c" opacity=".8"/>
<circle cx="98.1" cy="402.1" r="1.1" fill="#b98a6c" opacity=".8"/>
<circle cx="58.4" cy="364.6" r="1.1" fill="#b98a6c" opacity=".8"/>
<circle cx="95.6" cy="402.0" r="1.1" fill="#b98a6c" opacity=".8"/>
<circle cx="97.7" cy="401.0" r="1.1" fill="#b98a6c" opacity=".8"/>
<circle cx="53.9" cy="380.6" r="1.1" fill="#b98a6c" opacity=".8"/>
<circle cx="45.9" cy="367.5" r="1.1" fill="#b98a6c" opacity=".8"/>
<circle cx="69.3" cy="390.2" r="1.1" fill="#b98a6c" opacity=".8"/>
<circle cx="58.1" cy="376.8" r="1.1" fill="#b98a6c" opacity=".8"/>
<path d="M0.0 455.0L-0.6 420.3" stroke="#b8ad88" stroke-width=".8" fill="none" opacity=".8"/>
<path d="M0.0 455.0L0.6 422.3" stroke="#b8ad88" stroke-width=".8" fill="none" opacity=".8"/>
<path d="M0.0 455.0L-1.9 418.1" stroke="#b8ad88" stroke-width=".8" fill="none" opacity=".8"/>
<path d="M0.0 455.0L1.4 423.8" stroke="#b8ad88" stroke-width=".8" fill="none" opacity=".8"/>
<path d="M0.0 455.0L3.9 428.0" stroke="#b8ad88" stroke-width=".8" fill="none" opacity=".8"/>
<path d="M0.0 455.0L3.7 427.8" stroke="#b8ad88" stroke-width=".8" fill="none" opacity=".8"/>
<path d="M0.0 455.0L13.7 445.1" stroke="#b8ad88" stroke-width=".8" fill="none" opacity=".8"/>
<path d="M0.0 455.0L3.4 427.2" stroke="#b8ad88" stroke-width=".8" fill="none" opacity=".8"/>
<path d="M0.0 455.0L8.0 435.2" stroke="#b8ad88" stroke-width=".8" fill="none" opacity=".8"/>
<circle cx="7.1" cy="435.1" r="3.6" fill="#e8b59c" opacity=".8"/>
<circle cx="15.7" cy="445.2" r="4.2" fill="#e8b59c" opacity=".8"/>
<circle cx="3.8" cy="436.9" r="3.2" fill="#e8b59c" opacity=".8"/>
<circle cx="23.4" cy="426.1" r="4.1" fill="#e8b59c" opacity=".8"/>
<circle cx="22.7" cy="427.6" r="4.1" fill="#e8b59c" opacity=".8"/>
<circle cx="22.9" cy="409.8" r="3.8" fill="#e8b59c" opacity=".8"/>
<circle cx="27.8" cy="427.1" r="4.4" fill="#e8b59c" opacity=".8"/>
<circle cx="-4.3" cy="422.7" r="3.1" fill="#e8b59c" opacity=".8"/>
<circle cx="6.0" cy="433.8" r="4.6" fill="#e8b59c" opacity=".8"/>
<circle cx="3.9" cy="430.0" r="4.9" fill="#e8b59c" opacity=".8"/>
<circle cx="26.6" cy="431.6" r="3.6" fill="#e8b59c" opacity=".8"/>
<circle cx="3.0" cy="431.6" r="3.3" fill="#e8b59c" opacity=".8"/>
<circle cx="-0.9" cy="420.8" r="5.1" fill="#e8b59c" opacity=".8"/>
<circle cx="18.6" cy="440.4" r="3.5" fill="#e8b59c" opacity=".8"/>
<circle cx="16.5" cy="436.9" r="3.8" fill="#e8b59c" opacity=".8"/>
<circle cx="14.7" cy="439.8" r="4.0" fill="#e8b59c" opacity=".8"/>
<circle cx="3.2" cy="419.4" r="4.1" fill="#e8b59c" opacity=".8"/>
<circle cx="13.3" cy="438.0" r="3.2" fill="#e8b59c" opacity=".8"/>
<circle cx="3.7" cy="426.3" r="3.0" fill="#e8b59c" opacity=".8"/>
<circle cx="0.5" cy="428.3" r="4.2" fill="#e8b59c" opacity=".8"/>
<circle cx="24.9" cy="418.3" r="4.6" fill="#e8b59c" opacity=".8"/>
<circle cx="21.9" cy="431.5" r="3.7" fill="#e8b59c" opacity=".8"/>
<circle cx="13.0" cy="434.9" r="4.6" fill="#e8b59c" opacity=".8"/>
<circle cx="10.0" cy="423.6" r="4.8" fill="#e8b59c" opacity=".8"/>
<circle cx="25.1" cy="433.8" r="4.6" fill="#e8b59c" opacity=".8"/>
<circle cx="16.7" cy="426.6" r="4.2" fill="#e8b59c" opacity=".8"/>
<circle cx="-1.5" cy="410.3" r="4.8" fill="#e8b59c" opacity=".8"/>
<circle cx="26.0" cy="426.6" r="5.0" fill="#e8b59c" opacity=".8"/>
<circle cx="20.0" cy="412.4" r="3.5" fill="#e8b59c" opacity=".8"/>
<circle cx="10.5" cy="435.7" r="3.8" fill="#e8b59c" opacity=".8"/>
<circle cx="10.3" cy="445.0" r="4.4" fill="#e8b59c" opacity=".8"/>
<circle cx="13.9" cy="409.9" r="4.1" fill="#e8b59c" opacity=".8"/>
<circle cx="17.4" cy="445.2" r="4.6" fill="#e8b59c" opacity=".8"/>
<circle cx="0.2" cy="413.9" r="4.5" fill="#e8b59c" opacity=".8"/>
<circle cx="9.4" cy="447.1" r="3.6" fill="#e8b59c" opacity=".8"/>
<circle cx="8.2" cy="439.6" r="4.6" fill="#e8b59c" opacity=".8"/>
<circle cx="3.4" cy="436.7" r="4.1" fill="#e8b59c" opacity=".8"/>
<circle cx="-3.8" cy="421.8" r="4.7" fill="#e8b59c" opacity=".8"/>
<circle cx="12.6" cy="410.2" r="3.2" fill="#e8b59c" opacity=".8"/>
<circle cx="5.0" cy="437.4" r="3.7" fill="#e8b59c" opacity=".8"/>
<circle cx="7.9" cy="425.8" r="1.1" fill="#b98a6c" opacity=".8"/>
<circle cx="9.2" cy="438.3" r="1.1" fill="#b98a6c" opacity=".8"/>
<circle cx="17.9" cy="413.4" r="1.1" fill="#b98a6c" opacity=".8"/>
<circle cx="14.6" cy="418.6" r="1.1" fill="#b98a6c" opacity=".8"/>
<circle cx="2.6" cy="415.6" r="1.1" fill="#b98a6c" opacity=".8"/>
<circle cx="3.3" cy="423.0" r="1.1" fill="#b98a6c" opacity=".8"/>
<circle cx="16.6" cy="431.0" r="1.1" fill="#b98a6c" opacity=".8"/>
<circle cx="20.0" cy="443.0" r="1.1" fill="#b98a6c" opacity=".8"/>
<circle cx="13.3" cy="440.3" r="1.1" fill="#b98a6c" opacity=".8"/>
<circle cx="28.8" cy="425.6" r="1.1" fill="#b98a6c" opacity=".8"/>
<circle cx="0.1" cy="421.3" r="1.1" fill="#b98a6c" opacity=".8"/>
<circle cx="-7.2" cy="442.3" r="1.1" fill="#b98a6c" opacity=".8"/>
<circle cx="-4.0" cy="439.2" r="1.1" fill="#b98a6c" opacity=".8"/>
<path d="M107.0 477.0L83.2 453.6" stroke="#b8ad88" stroke-width=".8" fill="none" opacity=".8"/>
<path d="M107.0 477.0L109.7 457.3" stroke="#b8ad88" stroke-width=".8" fill="none" opacity=".8"/>
<path d="M107.0 477.0L139.4 461.5" stroke="#b8ad88" stroke-width=".8" fill="none" opacity=".8"/>
<path d="M107.0 477.0L82.5 453.5" stroke="#b8ad88" stroke-width=".8" fill="none" opacity=".8"/>
<path d="M107.0 477.0L130.2 460.2" stroke="#b8ad88" stroke-width=".8" fill="none" opacity=".8"/>
<path d="M107.0 477.0L108.6 457.2" stroke="#b8ad88" stroke-width=".8" fill="none" opacity=".8"/>
<path d="M107.0 477.0L134.8 460.9" stroke="#b8ad88" stroke-width=".8" fill="none" opacity=".8"/>
<path d="M107.0 477.0L122.1 459.1" stroke="#b8ad88" stroke-width=".8" fill="none" opacity=".8"/>
<path d="M107.0 477.0L89.4 454.5" stroke="#b8ad88" stroke-width=".8" fill="none" opacity=".8"/>
<circle cx="128.3" cy="447.7" r="3.1" fill="#e8b59c" opacity=".8"/>
<circle cx="132.3" cy="455.7" r="4.0" fill="#e8b59c" opacity=".8"/>
<circle cx="103.3" cy="455.4" r="3.7" fill="#e8b59c" opacity=".8"/>
<circle cx="108.9" cy="451.5" r="4.7" fill="#e8b59c" opacity=".8"/>
<circle cx="115.1" cy="448.0" r="5.0" fill="#e8b59c" opacity=".8"/>
<circle cx="102.6" cy="435.4" r="3.6" fill="#e8b59c" opacity=".8"/>
<circle cx="92.1" cy="455.8" r="4.3" fill="#e8b59c" opacity=".8"/>
<circle cx="92.9" cy="453.7" r="3.1" fill="#e8b59c" opacity=".8"/>
<circle cx="132.9" cy="459.4" r="5.1" fill="#e8b59c" opacity=".8"/>
<circle cx="107.5" cy="456.5" r="3.4" fill="#e8b59c" opacity=".8"/>
<circle cx="83.5" cy="454.2" r="4.8" fill="#e8b59c" opacity=".8"/>
<circle cx="87.1" cy="437.0" r="5.1" fill="#e8b59c" opacity=".8"/>
<circle cx="80.6" cy="443.7" r="3.1" fill="#e8b59c" opacity=".8"/>
<circle cx="107.0" cy="440.4" r="4.7" fill="#e8b59c" opacity=".8"/>
<circle cx="97.6" cy="443.3" r="3.1" fill="#e8b59c" opacity=".8"/>
<circle cx="119.5" cy="450.9" r="4.0" fill="#e8b59c" opacity=".8"/>
<circle cx="96.8" cy="455.6" r="5.1" fill="#e8b59c" opacity=".8"/>
<circle cx="105.7" cy="455.6" r="4.2" fill="#e8b59c" opacity=".8"/>
<circle cx="96.2" cy="454.7" r="3.4" fill="#e8b59c" opacity=".8"/>
<circle cx="116.0" cy="457.6" r="3.5" fill="#e8b59c" opacity=".8"/>
<circle cx="138.1" cy="446.7" r="4.0" fill="#e8b59c" opacity=".8"/>
<circle cx="116.9" cy="459.0" r="3.2" fill="#e8b59c" opacity=".8"/>
<circle cx="101.7" cy="455.5" r="3.5" fill="#e8b59c" opacity=".8"/>
<circle cx="105.8" cy="457.4" r="4.6" fill="#e8b59c" opacity=".8"/>
<circle cx="88.2" cy="455.0" r="4.2" fill="#e8b59c" opacity=".8"/>
<circle cx="93.1" cy="453.1" r="3.6" fill="#e8b59c" opacity=".8"/>
<circle cx="120.2" cy="452.5" r="4.1" fill="#e8b59c" opacity=".8"/>
<circle cx="87.5" cy="437.5" r="3.5" fill="#e8b59c" opacity=".8"/>
<circle cx="105.1" cy="455.8" r="4.0" fill="#e8b59c" opacity=".8"/>
<circle cx="139.2" cy="451.9" r="4.9" fill="#e8b59c" opacity=".8"/>
<circle cx="114.1" cy="453.3" r="4.6" fill="#e8b59c" opacity=".8"/>
<circle cx="127.9" cy="447.6" r="4.3" fill="#e8b59c" opacity=".8"/>
<circle cx="129.7" cy="455.1" r="5.0" fill="#e8b59c" opacity=".8"/>
<circle cx="124.6" cy="440.2" r="5.1" fill="#e8b59c" opacity=".8"/>
<circle cx="107.3" cy="457.6" r="3.3" fill="#e8b59c" opacity=".8"/>
<circle cx="79.9" cy="446.1" r="5.1" fill="#e8b59c" opacity=".8"/>
<circle cx="104.9" cy="438.0" r="4.7" fill="#e8b59c" opacity=".8"/>
<circle cx="82.7" cy="451.8" r="3.1" fill="#e8b59c" opacity=".8"/>
<circle cx="112.5" cy="444.5" r="5.0" fill="#e8b59c" opacity=".8"/>
<circle cx="97.4" cy="443.0" r="3.3" fill="#e8b59c" opacity=".8"/>
<circle cx="107.0" cy="457.0" r="3.2" fill="#e8b59c" opacity=".8"/>
<circle cx="130.0" cy="460.4" r="4.3" fill="#e8b59c" opacity=".8"/>
<circle cx="94.8" cy="455.4" r="4.3" fill="#e8b59c" opacity=".8"/>
<circle cx="126.9" cy="455.3" r="4.0" fill="#e8b59c" opacity=".8"/>
<circle cx="135.4" cy="452.3" r="4.9" fill="#e8b59c" opacity=".8"/>
<circle cx="91.2" cy="450.9" r="3.5" fill="#e8b59c" opacity=".8"/>
<circle cx="136.7" cy="452.5" r="3.7" fill="#e8b59c" opacity=".8"/>
<circle cx="132.0" cy="457.0" r="4.5" fill="#e8b59c" opacity=".8"/>
<circle cx="92.0" cy="453.9" r="4.5" fill="#e8b59c" opacity=".8"/>
<circle cx="123.2" cy="450.4" r="3.1" fill="#e8b59c" opacity=".8"/>
<circle cx="95.5" cy="455.3" r="3.4" fill="#e8b59c" opacity=".8"/>
<circle cx="118.6" cy="439.4" r="4.1" fill="#e8b59c" opacity=".8"/>
<circle cx="116.9" cy="457.2" r="4.8" fill="#e8b59c" opacity=".8"/>
<circle cx="109.2" cy="457.5" r="3.6" fill="#e8b59c" opacity=".8"/>
<circle cx="131.8" cy="451.7" r="3.4" fill="#e8b59c" opacity=".8"/>
<circle cx="111.0" cy="457.4" r="5.1" fill="#e8b59c" opacity=".8"/>
<circle cx="120.7" cy="457.4" r="5.1" fill="#e8b59c" opacity=".8"/>
<circle cx="112.5" cy="455.7" r="3.1" fill="#e8b59c" opacity=".8"/>
<circle cx="81.5" cy="453.9" r="4.6" fill="#e8b59c" opacity=".8"/>
<circle cx="141.5" cy="456.4" r="3.7" fill="#e8b59c" opacity=".8"/>
<circle cx="120.5" cy="459.0" r="3.1" fill="#e8b59c" opacity=".8"/>
<circle cx="98.3" cy="441.6" r="3.8" fill="#e8b59c" opacity=".8"/>
<circle cx="100.6" cy="454.0" r="3.6" fill="#e8b59c" opacity=".8"/>
<circle cx="87.4" cy="452.5" r="5.1" fill="#e8b59c" opacity=".8"/>
<circle cx="112.7" cy="458.1" r="4.8" fill="#e8b59c" opacity=".8"/>
<circle cx="100.8" cy="452.6" r="4.0" fill="#e8b59c" opacity=".8"/>
<circle cx="84.3" cy="452.3" r="3.8" fill="#e8b59c" opacity=".8"/>
<circle cx="113.1" cy="450.9" r="3.9" fill="#e8b59c" opacity=".8"/>
<circle cx="121.4" cy="440.0" r="3.1" fill="#e8b59c" opacity=".8"/>
<circle cx="116.3" cy="454.1" r="5.0" fill="#e8b59c" opacity=".8"/>
<circle cx="105.9" cy="457.4" r="3.7" fill="#e8b59c" opacity=".8"/>
<circle cx="102.6" cy="456.1" r="3.6" fill="#e8b59c" opacity=".8"/>
<circle cx="105.2" cy="442.2" r="3.6" fill="#e8b59c" opacity=".8"/>
<circle cx="138.1" cy="456.6" r="5.0" fill="#e8b59c" opacity=".8"/>
<circle cx="87.3" cy="436.7" r="3.1" fill="#e8b59c" opacity=".8"/>
<circle cx="109.6" cy="458.1" r="5.1" fill="#e8b59c" opacity=".8"/>
<circle cx="94.1" cy="455.7" r="3.9" fill="#e8b59c" opacity=".8"/>
<circle cx="74.5" cy="448.0" r="3.4" fill="#e8b59c" opacity=".8"/>
<circle cx="119.6" cy="439.7" r="4.8" fill="#e8b59c" opacity=".8"/>
<circle cx="113.7" cy="439.6" r="3.7" fill="#e8b59c" opacity=".8"/>
<circle cx="98.9" cy="459.1" r="1.1" fill="#b98a6c" opacity=".8"/>
<circle cx="110.4" cy="448.1" r="1.1" fill="#b98a6c" opacity=".8"/>
<circle cx="115.1" cy="465.7" r="1.1" fill="#b98a6c" opacity=".8"/>
<circle cx="107.6" cy="455.9" r="1.1" fill="#b98a6c" opacity=".8"/>
<circle cx="130.3" cy="457.6" r="1.1" fill="#b98a6c" opacity=".8"/>
<circle cx="92.0" cy="463.3" r="1.1" fill="#b98a6c" opacity=".8"/>
<circle cx="132.5" cy="445.2" r="1.1" fill="#b98a6c" opacity=".8"/>
<circle cx="106.5" cy="456.3" r="1.1" fill="#b98a6c" opacity=".8"/>
<circle cx="125.2" cy="460.6" r="1.1" fill="#b98a6c" opacity=".8"/>
<circle cx="104.2" cy="441.5" r="1.1" fill="#b98a6c" opacity=".8"/>
<circle cx="108.6" cy="462.0" r="1.1" fill="#b98a6c" opacity=".8"/>
<circle cx="90.6" cy="440.8" r="1.1" fill="#b98a6c" opacity=".8"/>
<circle cx="109.6" cy="438.0" r="1.1" fill="#b98a6c" opacity=".8"/>
<circle cx="103.1" cy="446.7" r="1.1" fill="#b98a6c" opacity=".8"/>
<circle cx="118.1" cy="446.4" r="1.1" fill="#b98a6c" opacity=".8"/>
<circle cx="91.1" cy="445.8" r="1.1" fill="#b98a6c" opacity=".8"/>
<circle cx="107.9" cy="445.1" r="1.1" fill="#b98a6c" opacity=".8"/>
<circle cx="107.2" cy="459.5" r="1.1" fill="#b98a6c" opacity=".8"/>
<circle cx="123.1" cy="466.1" r="1.1" fill="#b98a6c" opacity=".8"/>
<circle cx="92.9" cy="445.7" r="1.1" fill="#b98a6c" opacity=".8"/>
<circle cx="82.0" cy="457.7" r="1.1" fill="#b98a6c" opacity=".8"/>
<circle cx="93.1" cy="449.6" r="1.1" fill="#b98a6c" opacity=".8"/>
<circle cx="118.7" cy="441.8" r="1.1" fill="#b98a6c" opacity=".8"/>
<circle cx="118.0" cy="453.1" r="1.1" fill="#b98a6c" opacity=".8"/>
<circle cx="79.8" cy="450.2" r="1.1" fill="#b98a6c" opacity=".8"/>
<circle cx="125.8" cy="442.1" r="1.1" fill="#b98a6c" opacity=".8"/>
<path d="M35.0 490.0L7.4 475.1" stroke="#b8ad88" stroke-width=".8" fill="none" opacity=".8"/>
<path d="M35.0 490.0L22.6 475.1" stroke="#b8ad88" stroke-width=".8" fill="none" opacity=".8"/>
<path d="M35.0 490.0L12.2 475.1" stroke="#b8ad88" stroke-width=".8" fill="none" opacity=".8"/>
<path d="M35.0 490.0L16.4 475.1" stroke="#b8ad88" stroke-width=".8" fill="none" opacity=".8"/>
<path d="M35.0 490.0L63.4 475.1" stroke="#b8ad88" stroke-width=".8" fill="none" opacity=".8"/>
<path d="M35.0 490.0L40.0 475.1" stroke="#b8ad88" stroke-width=".8" fill="none" opacity=".8"/>
<path d="M35.0 490.0L60.8 475.1" stroke="#b8ad88" stroke-width=".8" fill="none" opacity=".8"/>
<path d="M35.0 490.0L27.3 475.1" stroke="#b8ad88" stroke-width=".8" fill="none" opacity=".8"/>
<path d="M35.0 490.0L57.0 475.1" stroke="#b8ad88" stroke-width=".8" fill="none" opacity=".8"/>
<circle cx="20.5" cy="472.7" r="4.7" fill="#e8b59c" opacity=".8"/>
<circle cx="44.2" cy="468.2" r="4.3" fill="#e8b59c" opacity=".8"/>
<circle cx="24.8" cy="464.6" r="3.8" fill="#e8b59c" opacity=".8"/>
<circle cx="43.5" cy="473.7" r="4.3" fill="#e8b59c" opacity=".8"/>
<circle cx="27.2" cy="463.8" r="3.0" fill="#e8b59c" opacity=".8"/>
<circle cx="23.5" cy="473.5" r="3.7" fill="#e8b59c" opacity=".8"/>
<circle cx="42.7" cy="474.6" r="3.1" fill="#e8b59c" opacity=".8"/>
<circle cx="50.2" cy="474.6" r="4.4" fill="#e8b59c" opacity=".8"/>
<circle cx="45.2" cy="473.7" r="4.5" fill="#e8b59c" opacity=".8"/>
<circle cx="21.5" cy="474.9" r="3.7" fill="#e8b59c" opacity=".8"/>
<circle cx="51.0" cy="467.2" r="4.2" fill="#e8b59c" opacity=".8"/>
<circle cx="22.9" cy="475.5" r="5.2" fill="#e8b59c" opacity=".8"/>
<circle cx="26.3" cy="475.7" r="4.6" fill="#e8b59c" opacity=".8"/>
<circle cx="35.7" cy="471.2" r="5.0" fill="#e8b59c" opacity=".8"/>
<circle cx="10.9" cy="474.2" r="4.9" fill="#e8b59c" opacity=".8"/>
<circle cx="23.3" cy="471.7" r="3.0" fill="#e8b59c" opacity=".8"/>
<circle cx="12.2" cy="465.7" r="5.0" fill="#e8b59c" opacity=".8"/>
<circle cx="55.1" cy="474.1" r="4.1" fill="#e8b59c" opacity=".8"/>
<circle cx="44.7" cy="474.5" r="5.0" fill="#e8b59c" opacity=".8"/>
<circle cx="51.3" cy="475.4" r="5.1" fill="#e8b59c" opacity=".8"/>
<circle cx="38.5" cy="475.7" r="5.1" fill="#e8b59c" opacity=".8"/>
<circle cx="55.6" cy="468.2" r="3.1" fill="#e8b59c" opacity=".8"/>
<circle cx="51.7" cy="465.3" r="5.0" fill="#e8b59c" opacity=".8"/>
<circle cx="15.2" cy="459.4" r="3.4" fill="#e8b59c" opacity=".8"/>
<circle cx="38.2" cy="462.2" r="3.9" fill="#e8b59c" opacity=".8"/>
<circle cx="50.5" cy="457.3" r="3.4" fill="#e8b59c" opacity=".8"/>
<circle cx="38.8" cy="474.5" r="3.8" fill="#e8b59c" opacity=".8"/>
<circle cx="45.7" cy="475.9" r="4.6" fill="#e8b59c" opacity=".8"/>
<circle cx="39.9" cy="467.9" r="4.2" fill="#e8b59c" opacity=".8"/>
<circle cx="35.3" cy="466.7" r="4.8" fill="#e8b59c" opacity=".8"/>
<circle cx="52.2" cy="474.6" r="4.4" fill="#e8b59c" opacity=".8"/>
<circle cx="28.3" cy="474.7" r="3.9" fill="#e8b59c" opacity=".8"/>
<circle cx="24.1" cy="460.5" r="4.0" fill="#e8b59c" opacity=".8"/>
<circle cx="58.3" cy="472.0" r="4.1" fill="#e8b59c" opacity=".8"/>
<circle cx="37.4" cy="475.3" r="4.0" fill="#e8b59c" opacity=".8"/>
<circle cx="43.8" cy="473.3" r="3.3" fill="#e8b59c" opacity=".8"/>
<circle cx="26.8" cy="472.2" r="4.0" fill="#e8b59c" opacity=".8"/>
<circle cx="29.0" cy="469.8" r="4.4" fill="#e8b59c" opacity=".8"/>
<circle cx="57.3" cy="475.3" r="4.1" fill="#e8b59c" opacity=".8"/>
<circle cx="55.1" cy="474.0" r="3.8" fill="#e8b59c" opacity=".8"/>
<circle cx="45.5" cy="468.1" r="4.9" fill="#e8b59c" opacity=".8"/>
<circle cx="60.7" cy="469.6" r="4.8" fill="#e8b59c" opacity=".8"/>
<circle cx="45.3" cy="474.4" r="5.1" fill="#e8b59c" opacity=".8"/>
<circle cx="45.5" cy="466.5" r="4.7" fill="#e8b59c" opacity=".8"/>
<circle cx="42.0" cy="468.2" r="3.8" fill="#e8b59c" opacity=".8"/>
<circle cx="35.5" cy="463.2" r="5.0" fill="#e8b59c" opacity=".8"/>
<circle cx="30.8" cy="473.4" r="4.1" fill="#e8b59c" opacity=".8"/>
<circle cx="47.0" cy="466.3" r="3.6" fill="#e8b59c" opacity=".8"/>
<circle cx="18.1" cy="469.6" r="3.1" fill="#e8b59c" opacity=".8"/>
<circle cx="40.0" cy="475.8" r="4.5" fill="#e8b59c" opacity=".8"/>
<circle cx="44.8" cy="465.7" r="4.7" fill="#e8b59c" opacity=".8"/>
<circle cx="51.4" cy="474.9" r="3.8" fill="#e8b59c" opacity=".8"/>
<circle cx="50.6" cy="460.9" r="4.3" fill="#e8b59c" opacity=".8"/>
<circle cx="42.2" cy="466.3" r="5.2" fill="#e8b59c" opacity=".8"/>
<circle cx="22.1" cy="462.2" r="4.8" fill="#e8b59c" opacity=".8"/>
<circle cx="32.2" cy="474.7" r="3.8" fill="#e8b59c" opacity=".8"/>
<circle cx="36.8" cy="458.7" r="3.4" fill="#e8b59c" opacity=".8"/>
<circle cx="34.7" cy="466.3" r="4.8" fill="#e8b59c" opacity=".8"/>
<circle cx="34.4" cy="475.9" r="4.3" fill="#e8b59c" opacity=".8"/>
<circle cx="26.3" cy="461.9" r="3.0" fill="#e8b59c" opacity=".8"/>
<circle cx="45.2" cy="471.2" r="1.1" fill="#b98a6c" opacity=".8"/>
<circle cx="21.8" cy="463.3" r="1.1" fill="#b98a6c" opacity=".8"/>
<circle cx="9.5" cy="468.8" r="1.1" fill="#b98a6c" opacity=".8"/>
<circle cx="43.7" cy="475.4" r="1.1" fill="#b98a6c" opacity=".8"/>
<circle cx="32.7" cy="468.1" r="1.1" fill="#b98a6c" opacity=".8"/>
<circle cx="51.1" cy="470.1" r="1.1" fill="#b98a6c" opacity=".8"/>
<circle cx="47.7" cy="475.7" r="1.1" fill="#b98a6c" opacity=".8"/>
<circle cx="38.3" cy="481.5" r="1.1" fill="#b98a6c" opacity=".8"/>
<circle cx="24.7" cy="466.3" r="1.1" fill="#b98a6c" opacity=".8"/>
<circle cx="21.8" cy="462.6" r="1.1" fill="#b98a6c" opacity=".8"/>
<circle cx="52.3" cy="481.1" r="1.1" fill="#b98a6c" opacity=".8"/>
<circle cx="35.4" cy="475.9" r="1.1" fill="#b98a6c" opacity=".8"/>
<circle cx="52.8" cy="476.9" r="1.1" fill="#b98a6c" opacity=".8"/>
<circle cx="51.5" cy="460.2" r="1.1" fill="#b98a6c" opacity=".8"/>
<circle cx="23.7" cy="474.5" r="1.1" fill="#b98a6c" opacity=".8"/>
<circle cx="56.6" cy="470.9" r="1.1" fill="#b98a6c" opacity=".8"/>
<circle cx="20.2" cy="466.5" r="1.1" fill="#b98a6c" opacity=".8"/>
<circle cx="24.0" cy="461.9" r="1.1" fill="#b98a6c" opacity=".8"/>
<circle cx="56.3" cy="465.0" r="1.1" fill="#b98a6c" opacity=".8"/>
<circle cx="35.2" cy="484.5" r="1.1" fill="#b98a6c" opacity=".8"/>
<path d="M92.0 507.0L61.2 499.3" stroke="#b8ad88" stroke-width=".8" fill="none" opacity=".8"/>
<path d="M92.0 507.0L95.2 496.3" stroke="#b8ad88" stroke-width=".8" fill="none" opacity=".8"/>
<path d="M92.0 507.0L86.4 497.1" stroke="#b8ad88" stroke-width=".8" fill="none" opacity=".8"/>
<path d="M92.0 507.0L74.7 498.1" stroke="#b8ad88" stroke-width=".8" fill="none" opacity=".8"/>
<path d="M92.0 507.0L62.2 499.2" stroke="#b8ad88" stroke-width=".8" fill="none" opacity=".8"/>
<path d="M92.0 507.0L112.4 494.8" stroke="#b8ad88" stroke-width=".8" fill="none" opacity=".8"/>
<path d="M92.0 507.0L59.0 499.5" stroke="#b8ad88" stroke-width=".8" fill="none" opacity=".8"/>
<path d="M92.0 507.0L96.6 496.2" stroke="#b8ad88" stroke-width=".8" fill="none" opacity=".8"/>
<path d="M92.0 507.0L123.7 493.8" stroke="#b8ad88" stroke-width=".8" fill="none" opacity=".8"/>
<circle cx="103.2" cy="496.3" r="4.3" fill="#e8b59c" opacity=".8"/>
<circle cx="65.1" cy="493.9" r="4.8" fill="#e8b59c" opacity=".8"/>
<circle cx="102.1" cy="494.6" r="3.1" fill="#e8b59c" opacity=".8"/>
<circle cx="116.0" cy="481.5" r="4.6" fill="#e8b59c" opacity=".8"/>
<circle cx="125.1" cy="489.7" r="4.6" fill="#e8b59c" opacity=".8"/>
<circle cx="63.9" cy="497.4" r="4.0" fill="#e8b59c" opacity=".8"/>
<circle cx="95.1" cy="496.6" r="3.5" fill="#e8b59c" opacity=".8"/>
<circle cx="112.8" cy="492.4" r="4.6" fill="#e8b59c" opacity=".8"/>
<circle cx="81.0" cy="480.0" r="4.6" fill="#e8b59c" opacity=".8"/>
<circle cx="90.7" cy="496.0" r="4.7" fill="#e8b59c" opacity=".8"/>
<circle cx="75.1" cy="492.4" r="4.4" fill="#e8b59c" opacity=".8"/>
<circle cx="108.7" cy="489.1" r="4.9" fill="#e8b59c" opacity=".8"/>
<circle cx="110.8" cy="491.2" r="3.5" fill="#e8b59c" opacity=".8"/>
<circle cx="90.4" cy="477.6" r="4.6" fill="#e8b59c" opacity=".8"/>
<circle cx="78.1" cy="496.8" r="3.5" fill="#e8b59c" opacity=".8"/>
<circle cx="115.6" cy="483.5" r="4.5" fill="#e8b59c" opacity=".8"/>
<circle cx="74.4" cy="480.8" r="4.0" fill="#e8b59c" opacity=".8"/>
<circle cx="107.6" cy="480.1" r="4.9" fill="#e8b59c" opacity=".8"/>
<circle cx="66.0" cy="499.3" r="4.3" fill="#e8b59c" opacity=".8"/>
<circle cx="87.7" cy="496.7" r="3.2" fill="#e8b59c" opacity=".8"/>
<circle cx="104.0" cy="488.0" r="3.1" fill="#e8b59c" opacity=".8"/>
<circle cx="119.6" cy="493.2" r="3.3" fill="#e8b59c" opacity=".8"/>
<circle cx="100.0" cy="491.9" r="4.5" fill="#e8b59c" opacity=".8"/>
<circle cx="72.8" cy="484.4" r="4.6" fill="#e8b59c" opacity=".8"/>
<circle cx="117.9" cy="494.5" r="3.8" fill="#e8b59c" opacity=".8"/>
<circle cx="104.9" cy="478.5" r="5.0" fill="#e8b59c" opacity=".8"/>
<circle cx="123.2" cy="494.4" r="5.1" fill="#e8b59c" opacity=".8"/>
<circle cx="105.7" cy="495.1" r="3.2" fill="#e8b59c" opacity=".8"/>
<circle cx="124.6" cy="492.2" r="4.8" fill="#e8b59c" opacity=".8"/>
<circle cx="71.0" cy="483.7" r="4.4" fill="#e8b59c" opacity=".8"/>
<circle cx="90.8" cy="496.8" r="3.2" fill="#e8b59c" opacity=".8"/>
<circle cx="93.1" cy="485.2" r="3.7" fill="#e8b59c" opacity=".8"/>
<circle cx="88.6" cy="493.4" r="3.6" fill="#e8b59c" opacity=".8"/>
<circle cx="87.3" cy="496.1" r="3.7" fill="#e8b59c" opacity=".8"/>
<circle cx="116.9" cy="487.5" r="4.9" fill="#e8b59c" opacity=".8"/>
<circle cx="88.3" cy="490.6" r="3.9" fill="#e8b59c" opacity=".8"/>
<circle cx="65.2" cy="499.6" r="3.8" fill="#e8b59c" opacity=".8"/>
<circle cx="84.9" cy="482.1" r="3.5" fill="#e8b59c" opacity=".8"/>
<circle cx="99.5" cy="488.0" r="4.8" fill="#e8b59c" opacity=".8"/>
<circle cx="93.6" cy="492.4" r="3.4" fill="#e8b59c" opacity=".8"/>
<circle cx="94.3" cy="477.0" r="3.0" fill="#e8b59c" opacity=".8"/>
<circle cx="68.6" cy="494.7" r="4.8" fill="#e8b59c" opacity=".8"/>
<circle cx="103.1" cy="494.7" r="4.8" fill="#e8b59c" opacity=".8"/>
<circle cx="91.0" cy="495.6" r="3.5" fill="#e8b59c" opacity=".8"/>
<circle cx="84.4" cy="482.7" r="3.2" fill="#e8b59c" opacity=".8"/>
<circle cx="86.2" cy="489.4" r="4.7" fill="#e8b59c" opacity=".8"/>
<circle cx="81.8" cy="480.4" r="4.4" fill="#e8b59c" opacity=".8"/>
<circle cx="79.7" cy="496.8" r="5.0" fill="#e8b59c" opacity=".8"/>
<circle cx="121.4" cy="492.2" r="3.5" fill="#e8b59c" opacity=".8"/>
<circle cx="90.6" cy="496.2" r="3.8" fill="#e8b59c" opacity=".8"/>
<circle cx="105.1" cy="486.1" r="4.0" fill="#e8b59c" opacity=".8"/>
<circle cx="63.1" cy="492.0" r="4.7" fill="#e8b59c" opacity=".8"/>
<circle cx="79.9" cy="486.1" r="3.7" fill="#e8b59c" opacity=".8"/>
<circle cx="111.3" cy="494.8" r="4.6" fill="#e8b59c" opacity=".8"/>
<circle cx="104.6" cy="495.7" r="4.3" fill="#e8b59c" opacity=".8"/>
<circle cx="110.1" cy="495.5" r="3.5" fill="#e8b59c" opacity=".8"/>
<circle cx="100.3" cy="495.9" r="4.9" fill="#e8b59c" opacity=".8"/>
<circle cx="101.2" cy="496.2" r="3.5" fill="#e8b59c" opacity=".8"/>
<circle cx="81.6" cy="496.1" r="3.7" fill="#e8b59c" opacity=".8"/>
<circle cx="106.2" cy="495.4" r="3.2" fill="#e8b59c" opacity=".8"/>
<circle cx="103.7" cy="489.9" r="3.8" fill="#e8b59c" opacity=".8"/>
<circle cx="123.8" cy="487.9" r="4.6" fill="#e8b59c" opacity=".8"/>
<circle cx="79.1" cy="495.9" r="4.4" fill="#e8b59c" opacity=".8"/>
<circle cx="105.8" cy="495.1" r="3.9" fill="#e8b59c" opacity=".8"/>
<circle cx="114.7" cy="492.1" r="4.7" fill="#e8b59c" opacity=".8"/>
<circle cx="83.6" cy="482.8" r="4.4" fill="#e8b59c" opacity=".8"/>
<circle cx="80.3" cy="494.4" r="4.3" fill="#e8b59c" opacity=".8"/>
<circle cx="68.6" cy="499.2" r="3.9" fill="#e8b59c" opacity=".8"/>
<circle cx="65.5" cy="488.6" r="3.9" fill="#e8b59c" opacity=".8"/>
<circle cx="97.4" cy="496.6" r="4.7" fill="#e8b59c" opacity=".8"/>
<circle cx="81.9" cy="479.7" r="4.5" fill="#e8b59c" opacity=".8"/>
<circle cx="77.5" cy="485.5" r="3.7" fill="#e8b59c" opacity=".8"/>
<circle cx="85.2" cy="489.3" r="3.9" fill="#e8b59c" opacity=".8"/>
<circle cx="97.9" cy="479.1" r="4.4" fill="#e8b59c" opacity=".8"/>
<circle cx="93.3" cy="495.8" r="4.4" fill="#e8b59c" opacity=".8"/>
<circle cx="71.8" cy="499.9" r="1.1" fill="#b98a6c" opacity=".8"/>
<circle cx="104.9" cy="488.5" r="1.1" fill="#b98a6c" opacity=".8"/>
<circle cx="76.5" cy="483.6" r="1.1" fill="#b98a6c" opacity=".8"/>
<circle cx="76.7" cy="499.5" r="1.1" fill="#b98a6c" opacity=".8"/>
<circle cx="99.0" cy="491.1" r="1.1" fill="#b98a6c" opacity=".8"/>
<circle cx="80.8" cy="491.6" r="1.1" fill="#b98a6c" opacity=".8"/>
<circle cx="97.9" cy="478.7" r="1.1" fill="#b98a6c" opacity=".8"/>
<circle cx="83.1" cy="492.4" r="1.1" fill="#b98a6c" opacity=".8"/>
<circle cx="72.0" cy="489.3" r="1.1" fill="#b98a6c" opacity=".8"/>
<circle cx="87.6" cy="483.0" r="1.1" fill="#b98a6c" opacity=".8"/>
<circle cx="73.9" cy="484.2" r="1.1" fill="#b98a6c" opacity=".8"/>
<circle cx="73.0" cy="492.6" r="1.1" fill="#b98a6c" opacity=".8"/>
<circle cx="106.4" cy="488.8" r="1.1" fill="#b98a6c" opacity=".8"/>
<circle cx="84.4" cy="485.0" r="1.1" fill="#b98a6c" opacity=".8"/>
<circle cx="93.5" cy="487.2" r="1.1" fill="#b98a6c" opacity=".8"/>
<circle cx="111.6" cy="489.6" r="1.1" fill="#b98a6c" opacity=".8"/>
<circle cx="108.6" cy="493.1" r="1.1" fill="#b98a6c" opacity=".8"/>
<circle cx="90.2" cy="493.2" r="1.1" fill="#b98a6c" opacity=".8"/>
<circle cx="75.6" cy="497.8" r="1.1" fill="#b98a6c" opacity=".8"/>
<circle cx="86.4" cy="485.0" r="1.1" fill="#b98a6c" opacity=".8"/>
<circle cx="92.1" cy="498.5" r="1.1" fill="#b98a6c" opacity=".8"/>
<circle cx="90.2" cy="479.1" r="1.1" fill="#b98a6c" opacity=".8"/>
<circle cx="78.4" cy="492.2" r="1.1" fill="#b98a6c" opacity=".8"/>
<circle cx="98.5" cy="483.5" r="1.1" fill="#b98a6c" opacity=".8"/>
<circle cx="96.1" cy="496.5" r="1.1" fill="#b98a6c" opacity=".8"/>
<!--YEL-->
<g fill="#a88c5c" opacity=".95"><path d="M904 372C885 385 868 410 858 445C872 440 895 420 904 405Z"/><path d="M823 448C845 452 866 470 870 492C850 490 828 470 823 448Z"/><path d="M904 448C892 460 880 478 878 493C890 490 904 478 904 470Z"/></g>
<path d="M840 410C852 440 860 465 866 495" fill="none" stroke="#9a7a56" stroke-width="1.8"/>
<path d="M808 480L904 494V508H801Z" fill="#e2a47a"/>
<g stroke="#a07850" stroke-width=".9" fill="none" opacity=".5"><path d="M840 412L820 380M840 412L846 372M840 412L866 380M840 412L812 402M840 412L870 400"/></g>
<circle cx="803.0" cy="377.2" r="4.4" fill="#eee0ae" opacity=".95"/>
<circle cx="798.3" cy="379.6" r="4.4" fill="#eee0ae" opacity=".95"/>
<circle cx="794.5" cy="375.9" r="4.4" fill="#eee0ae" opacity=".95"/>
<circle cx="796.9" cy="371.2" r="4.4" fill="#eee0ae" opacity=".95"/>
<circle cx="802.1" cy="372.0" r="4.4" fill="#eee0ae" opacity=".95"/>
<circle cx="819.9" cy="365.9" r="4.4" fill="#eee0ae" opacity=".95"/>
<circle cx="816.4" cy="369.9" r="4.4" fill="#eee0ae" opacity=".95"/>
<circle cx="811.6" cy="367.8" r="4.4" fill="#eee0ae" opacity=".95"/>
<circle cx="812.0" cy="362.6" r="4.4" fill="#eee0ae" opacity=".95"/>
<circle cx="817.2" cy="361.4" r="4.4" fill="#eee0ae" opacity=".95"/>
<circle cx="834.3" cy="362.8" r="4.4" fill="#eee0ae" opacity=".95"/>
<circle cx="830.0" cy="365.8" r="4.4" fill="#eee0ae" opacity=".95"/>
<circle cx="825.8" cy="362.7" r="4.4" fill="#eee0ae" opacity=".95"/>
<circle cx="827.5" cy="357.7" r="4.4" fill="#eee0ae" opacity=".95"/>
<circle cx="832.7" cy="357.7" r="4.4" fill="#eee0ae" opacity=".95"/>
<circle cx="852.7" cy="362.5" r="4.4" fill="#eee0ae" opacity=".95"/>
<circle cx="847.7" cy="364.3" r="4.4" fill="#eee0ae" opacity=".95"/>
<circle cx="844.4" cy="360.2" r="4.4" fill="#eee0ae" opacity=".95"/>
<circle cx="847.4" cy="355.8" r="4.4" fill="#eee0ae" opacity=".95"/>
<circle cx="852.5" cy="357.2" r="4.4" fill="#eee0ae" opacity=".95"/>
<circle cx="870.5" cy="369.1" r="4.4" fill="#eee0ae" opacity=".95"/>
<circle cx="865.2" cy="369.9" r="4.4" fill="#eee0ae" opacity=".95"/>
<circle cx="862.9" cy="365.1" r="4.4" fill="#eee0ae" opacity=".95"/>
<circle cx="866.7" cy="361.4" r="4.4" fill="#eee0ae" opacity=".95"/>
<circle cx="871.4" cy="363.9" r="4.4" fill="#eee0ae" opacity=".95"/>
<circle cx="878.7" cy="360.5" r="4.4" fill="#eee0ae" opacity=".95"/>
<circle cx="873.4" cy="359.7" r="4.4" fill="#eee0ae" opacity=".95"/>
<circle cx="872.6" cy="354.5" r="4.4" fill="#eee0ae" opacity=".95"/>
<circle cx="877.3" cy="352.1" r="4.4" fill="#eee0ae" opacity=".95"/>
<circle cx="881.0" cy="355.8" r="4.4" fill="#eee0ae" opacity=".95"/>
<circle cx="798.1" cy="396.3" r="4.4" fill="#eee0ae" opacity=".95"/>
<circle cx="792.8" cy="396.8" r="4.4" fill="#eee0ae" opacity=".95"/>
<circle cx="790.7" cy="392.0" r="4.4" fill="#eee0ae" opacity=".95"/>
<circle cx="794.6" cy="388.5" r="4.4" fill="#eee0ae" opacity=".95"/>
<circle cx="799.2" cy="391.2" r="4.4" fill="#eee0ae" opacity=".95"/>
<circle cx="813.6" cy="388.1" r="4.4" fill="#eee0ae" opacity=".95"/>
<circle cx="808.4" cy="389.1" r="4.4" fill="#eee0ae" opacity=".95"/>
<circle cx="805.8" cy="384.5" r="4.4" fill="#eee0ae" opacity=".95"/>
<circle cx="809.4" cy="380.6" r="4.4" fill="#eee0ae" opacity=".95"/>
<circle cx="814.2" cy="382.8" r="4.4" fill="#eee0ae" opacity=".95"/>
<circle cx="831.3" cy="380.1" r="4.4" fill="#eee0ae" opacity=".95"/>
<circle cx="826.1" cy="379.3" r="4.4" fill="#eee0ae" opacity=".95"/>
<circle cx="825.2" cy="374.1" r="4.4" fill="#eee0ae" opacity=".95"/>
<circle cx="829.9" cy="371.7" r="4.4" fill="#eee0ae" opacity=".95"/>
<circle cx="833.6" cy="375.4" r="4.4" fill="#eee0ae" opacity=".95"/>
<circle cx="849.9" cy="380.9" r="4.4" fill="#eee0ae" opacity=".95"/>
<circle cx="844.7" cy="380.0" r="4.4" fill="#eee0ae" opacity=".95"/>
<circle cx="843.9" cy="374.8" r="4.4" fill="#eee0ae" opacity=".95"/>
<circle cx="848.6" cy="372.4" r="4.4" fill="#eee0ae" opacity=".95"/>
<circle cx="852.3" cy="376.2" r="4.4" fill="#eee0ae" opacity=".95"/>
<circle cx="870.8" cy="387.8" r="4.4" fill="#eee0ae" opacity=".95"/>
<circle cx="866.0" cy="390.1" r="4.4" fill="#eee0ae" opacity=".95"/>
<circle cx="862.4" cy="386.3" r="4.4" fill="#eee0ae" opacity=".95"/>
<circle cx="864.9" cy="381.6" r="4.4" fill="#eee0ae" opacity=".95"/>
<circle cx="870.1" cy="382.6" r="4.4" fill="#eee0ae" opacity=".95"/>
<circle cx="880.9" cy="379.9" r="4.4" fill="#eee0ae" opacity=".95"/>
<circle cx="875.8" cy="378.7" r="4.4" fill="#eee0ae" opacity=".95"/>
<circle cx="875.4" cy="373.4" r="4.4" fill="#eee0ae" opacity=".95"/>
<circle cx="880.2" cy="371.4" r="4.4" fill="#eee0ae" opacity=".95"/>
<circle cx="883.7" cy="375.4" r="4.4" fill="#eee0ae" opacity=".95"/>
<circle cx="805.9" cy="409.2" r="4.4" fill="#eee0ae" opacity=".95"/>
<circle cx="802.2" cy="412.8" r="4.4" fill="#eee0ae" opacity=".95"/>
<circle cx="797.5" cy="410.4" r="4.4" fill="#eee0ae" opacity=".95"/>
<circle cx="798.4" cy="405.2" r="4.4" fill="#eee0ae" opacity=".95"/>
<circle cx="803.6" cy="404.4" r="4.4" fill="#eee0ae" opacity=".95"/>
<circle cx="820.7" cy="406.2" r="4.4" fill="#eee0ae" opacity=".95"/>
<circle cx="815.8" cy="408.2" r="4.4" fill="#eee0ae" opacity=".95"/>
<circle cx="812.4" cy="404.2" r="4.4" fill="#eee0ae" opacity=".95"/>
<circle cx="815.1" cy="399.7" r="4.4" fill="#eee0ae" opacity=".95"/>
<circle cx="820.3" cy="400.9" r="4.4" fill="#eee0ae" opacity=".95"/>
<circle cx="842.1" cy="397.9" r="4.4" fill="#eee0ae" opacity=".95"/>
<circle cx="837.1" cy="399.5" r="4.4" fill="#eee0ae" opacity=".95"/>
<circle cx="834.0" cy="395.2" r="4.4" fill="#eee0ae" opacity=".95"/>
<circle cx="837.2" cy="390.9" r="4.4" fill="#eee0ae" opacity=".95"/>
<circle cx="842.2" cy="392.6" r="4.4" fill="#eee0ae" opacity=".95"/>
<circle cx="858.9" cy="402.4" r="4.4" fill="#eee0ae" opacity=".95"/>
<circle cx="853.7" cy="403.5" r="4.4" fill="#eee0ae" opacity=".95"/>
<circle cx="851.1" cy="398.9" r="4.4" fill="#eee0ae" opacity=".95"/>
<circle cx="854.6" cy="395.0" r="4.4" fill="#eee0ae" opacity=".95"/>
<circle cx="859.4" cy="397.2" r="4.4" fill="#eee0ae" opacity=".95"/>
<circle cx="875.3" cy="409.0" r="4.4" fill="#eee0ae" opacity=".95"/>
<circle cx="870.0" cy="409.5" r="4.4" fill="#eee0ae" opacity=".95"/>
<circle cx="868.0" cy="404.6" r="4.4" fill="#eee0ae" opacity=".95"/>
<circle cx="872.0" cy="401.1" r="4.4" fill="#eee0ae" opacity=".95"/>
<circle cx="876.5" cy="403.9" r="4.4" fill="#eee0ae" opacity=".95"/>
<circle cx="811.2" cy="431.7" r="4.4" fill="#eee0ae" opacity=".95"/>
<circle cx="806.1" cy="430.1" r="4.4" fill="#eee0ae" opacity=".95"/>
<circle cx="806.0" cy="424.8" r="4.4" fill="#eee0ae" opacity=".95"/>
<circle cx="811.1" cy="423.1" r="4.4" fill="#eee0ae" opacity=".95"/>
<circle cx="814.2" cy="427.4" r="4.4" fill="#eee0ae" opacity=".95"/>
<circle cx="828.8" cy="422.6" r="4.4" fill="#eee0ae" opacity=".95"/>
<circle cx="823.6" cy="421.9" r="4.4" fill="#eee0ae" opacity=".95"/>
<circle cx="822.6" cy="416.7" r="4.4" fill="#eee0ae" opacity=".95"/>
<circle cx="827.3" cy="414.2" r="4.4" fill="#eee0ae" opacity=".95"/>
<circle cx="831.1" cy="417.9" r="4.4" fill="#eee0ae" opacity=".95"/>
<circle cx="851.3" cy="422.6" r="4.4" fill="#eee0ae" opacity=".95"/>
<circle cx="846.1" cy="423.8" r="4.4" fill="#eee0ae" opacity=".95"/>
<circle cx="843.4" cy="419.2" r="4.4" fill="#eee0ae" opacity=".95"/>
<circle cx="846.8" cy="415.2" r="4.4" fill="#eee0ae" opacity=".95"/>
<circle cx="851.7" cy="417.3" r="4.4" fill="#eee0ae" opacity=".95"/>
<circle cx="867.1" cy="424.7" r="4.4" fill="#eee0ae" opacity=".95"/>
<circle cx="861.9" cy="424.2" r="4.4" fill="#eee0ae" opacity=".95"/>
<circle cx="860.7" cy="419.0" r="4.4" fill="#eee0ae" opacity=".95"/>
<circle cx="865.3" cy="416.4" r="4.4" fill="#eee0ae" opacity=".95"/>
<circle cx="869.3" cy="419.9" r="4.4" fill="#eee0ae" opacity=".95"/>
<circle cx="822.8" cy="439.5" r="4.4" fill="#eee0ae" opacity=".95"/>
<circle cx="819.3" cy="443.5" r="4.4" fill="#eee0ae" opacity=".95"/>
<circle cx="814.5" cy="441.5" r="4.4" fill="#eee0ae" opacity=".95"/>
<circle cx="814.9" cy="436.2" r="4.4" fill="#eee0ae" opacity=".95"/>
<circle cx="820.0" cy="435.0" r="4.4" fill="#eee0ae" opacity=".95"/>
<circle cx="843.9" cy="438.5" r="4.4" fill="#eee0ae" opacity=".95"/>
<circle cx="840.3" cy="442.4" r="4.4" fill="#eee0ae" opacity=".95"/>
<circle cx="835.5" cy="440.2" r="4.4" fill="#eee0ae" opacity=".95"/>
<circle cx="836.1" cy="434.9" r="4.4" fill="#eee0ae" opacity=".95"/>
<circle cx="841.3" cy="433.9" r="4.4" fill="#eee0ae" opacity=".95"/>
<circle cx="860.6" cy="436.5" r="4.4" fill="#eee0ae" opacity=".95"/>
<circle cx="856.8" cy="440.1" r="4.4" fill="#eee0ae" opacity=".95"/>
<circle cx="852.1" cy="437.6" r="4.4" fill="#eee0ae" opacity=".95"/>
<circle cx="853.1" cy="432.4" r="4.4" fill="#eee0ae" opacity=".95"/>
<circle cx="858.4" cy="431.7" r="4.4" fill="#eee0ae" opacity=".95"/>
<circle cx="791.2" cy="425.1" r="4.4" fill="#eee0ae" opacity=".95"/>
<circle cx="786.0" cy="424.3" r="4.4" fill="#eee0ae" opacity=".95"/>
<circle cx="785.2" cy="419.0" r="4.4" fill="#eee0ae" opacity=".95"/>
<circle cx="789.9" cy="416.6" r="4.4" fill="#eee0ae" opacity=".95"/>
<circle cx="793.6" cy="420.4" r="4.4" fill="#eee0ae" opacity=".95"/>
<circle cx="800.0" cy="375.0" r="2.3" fill="#c98e4e" opacity=".85"/>
<circle cx="815.0" cy="365.0" r="2.3" fill="#c98e4e" opacity=".85"/>
<circle cx="832.0" cy="360.0" r="2.3" fill="#c98e4e" opacity=".85"/>
<circle cx="850.0" cy="358.0" r="2.3" fill="#c98e4e" opacity=".85"/>
<circle cx="866.0" cy="366.0" r="2.3" fill="#c98e4e" opacity=".85"/>
<circle cx="878.0" cy="356.0" r="2.3" fill="#c98e4e" opacity=".85"/>
<circle cx="795.0" cy="392.0" r="2.3" fill="#c98e4e" opacity=".85"/>
<circle cx="812.0" cy="384.0" r="2.3" fill="#c98e4e" opacity=".85"/>
<circle cx="830.0" cy="378.0" r="2.3" fill="#c98e4e" opacity=".85"/>
<circle cx="848.0" cy="376.0" r="2.3" fill="#c98e4e" opacity=".85"/>
<circle cx="866.0" cy="384.0" r="2.3" fill="#c98e4e" opacity=".85"/>
<circle cx="878.0" cy="376.0" r="2.3" fill="#c98e4e" opacity=".85"/>
<circle cx="800.0" cy="410.0" r="2.3" fill="#c98e4e" opacity=".85"/>
<circle cx="818.0" cy="402.0" r="2.3" fill="#c98e4e" opacity=".85"/>
<circle cx="838.0" cy="396.0" r="2.3" fill="#c98e4e" opacity=".85"/>
<circle cx="856.0" cy="400.0" r="2.3" fill="#c98e4e" opacity=".85"/>
<circle cx="872.0" cy="404.0" r="2.3" fill="#c98e4e" opacity=".85"/>
<circle cx="808.0" cy="426.0" r="2.3" fill="#c98e4e" opacity=".85"/>
<circle cx="826.0" cy="420.0" r="2.3" fill="#c98e4e" opacity=".85"/>
<circle cx="846.0" cy="418.0" r="2.3" fill="#c98e4e" opacity=".85"/>
<circle cx="864.0" cy="422.0" r="2.3" fill="#c98e4e" opacity=".85"/>
<circle cx="818.0" cy="440.0" r="2.3" fill="#c98e4e" opacity=".85"/>
<circle cx="838.0" cy="436.0" r="2.3" fill="#c98e4e" opacity=".85"/>
<circle cx="855.0" cy="436.0" r="2.3" fill="#c98e4e" opacity=".85"/>
<circle cx="790.0" cy="420.0" r="2.3" fill="#c98e4e" opacity=".85"/>
<!--END-->
</svg>
<div class="a" style="left:129px;top:175px;width:600px;transform-origin:0 0;transform:rotate(-4.5deg)">
  <div style="width:600px;text-align:center;font-family:'Liberation Serif',serif;font-weight:bold;font-size:32px;line-height:30.5px;color:#574541;-webkit-text-stroke:0.6px #574541;transform:scaleX(1.125);transform-origin:300px 0;white-space:nowrap">New English. Historical Background.<br>Formation<br>of the National Language<br>Modern English period: variations and<br>dialects. Territorial variants of EL.</div>
</div>
<div class="a" style="left:0;top:0;width:904px;height:508px">
 <div class="a" style="left:331px;top:357px;width:210px;transform-origin:0 0;transform:rotate(-3.6deg) scaleX(1.12);font-family:'Liberation Serif',serif;font-style:italic;font-size:25px;line-height:34px;color:#4f4444;white-space:nowrap;letter-spacing:1.1px">Temirbek Zarina</div>
 <div class="a" style="left:318px;top:418px;width:250px;transform-origin:0 0;transform:rotate(-3.4deg) scaleX(1.12);font-family:'Liberation Serif',serif;font-style:italic;font-size:25px;line-height:34px;color:#4f4444;white-space:nowrap;letter-spacing:3.2px;word-spacing:5px">Kasymkhan Aiym</div>
</div>
<svg style="left:196px;top:432px" width="14" height="20" viewBox="0 0 14 20"><path d="M1 1V15L4.5 11.5L7 17.5L9 16.5L6.5 10.8H11.5Z" fill="#fff" stroke="#555" stroke-width="1"/></svg>
</div>

<div id="bottomdark" class="a"></div>

<!-- RIGHT PANEL -->
<div id="panel" class="a"></div>
<div class="a" style="left:1216px;top:23px;width:1px;height:897px;background:#e8e8ea"></div>
<div class="a" style="left:1337px;top:40px;font-size:13px;font-weight:bold;color:#232333;white-space:nowrap">Приложения</div>
<div class="a" style="left:1464px;top:36px;width:23px;height:23px;border-radius:5px;border:1px solid #ececef;box-shadow:0 1px 2px rgba(0,0,0,.06)"></div>
<div class="a" style="left:1497px;top:36px;width:23px;height:23px;border-radius:5px;border:1px solid #ececef;box-shadow:0 1px 2px rgba(0,0,0,.06)"></div>
<svg style="left:1464px;top:36px" width="60" height="23" viewBox="0 0 60 23">
 <g fill="none" stroke="#222" stroke-width="1.6">
  <path d="M6.5 6V17M18 11.5H8.5M12.5 7.5L8.5 11.5L12.5 15.5"/>
  <path d="M39 7L48 16M48 7L39 16" stroke-width="1.3"/>
 </g>
</svg>
<div class="a" style="left:1233px;top:86px;width:288px;height:28px;border-radius:9px;background:#ededf3"></div>
<div class="a" style="left:1235px;top:88px;width:142px;height:24px;border-radius:8px;background:#fff;box-shadow:0 1px 2px rgba(0,0,0,.12)"></div>
<div class="a" style="left:1235px;top:93px;width:142px;text-align:center;font-size:12px;font-weight:bold;color:#2f6fd6">My Apps</div>
<div class="a" style="left:1377px;top:93px;width:142px;text-align:center;font-size:12px;font-weight:bold;color:#75757f">Add Apps</div>
<div class="a" style="left:1217px;top:128px;width:319px;height:1px;background:#efeff1"></div>
<div class="a" style="left:1233px;top:156px;font-size:13px;font-weight:bold;color:#232333">My Apps</div>
<!-- illustration -->
<div class="a" style="left:1332px;top:270px;width:40px;height:41px;border-radius:8px;background:#b8d7fc"></div>
<div class="a" style="left:1381px;top:282px;width:29px;height:29px;border-radius:7px;background:#8dbcf9"></div>
<div class="a" style="left:1341px;top:317px;width:32px;height:32px;border-radius:7px;background:#8dbcf9"></div>
<div class="a" style="left:1381px;top:317px;width:41px;height:41px;border-radius:8px;background:#e5effc"></div>
<svg style="left:1381px;top:317px" width="41" height="41" viewBox="0 0 41 41"><path d="M20.5 12.5V28.5M12.5 20.5H28.5" stroke="#4b8eef" stroke-width="3" stroke-linecap="round"/></svg>
<div class="a" style="left:1217px;top:381px;width:319px;text-align:center;font-size:13.5px;color:#6e6e78;line-height:21px">&nbsp;<span style="color:#2d72d8">Add Apps</span> to enhance your Zoom<br>experience</div>
<div class="a" style="left:1233px;top:473px;font-size:13px;font-weight:bold;color:#232333">Built by Zoom</div>
<!-- app list -->
<div class="a" style="left:1240px;top:518px;width:33px;height:33px;border-radius:7px;background:#0e71eb"></div>
<svg style="left:1240px;top:518px" width="33" height="33" viewBox="0 0 33 33"><g fill="none" stroke="#fff" stroke-width="2"><circle cx="16.5" cy="18" r="8"/><path d="M16.5 13.5V18.5M13.5 8H19.5M16.5 8V10M22.5 10.5L24.5 12.5"/></g></svg>
<div class="a" style="left:1240px;top:598px;width:33px;height:33px;border-radius:7px;background:#0e71eb"></div>
<svg style="left:1240px;top:598px" width="33" height="33" viewBox="0 0 33 33"><g fill="none" stroke="#fff" stroke-width="2"><circle cx="11.5" cy="22" r="2.8"/><circle cx="21" cy="20" r="2.8"/><path d="M14.3 22V10.5L23.8 8.5V20M14.3 14L23.8 12"/></g></svg>
<div class="a" style="left:1240px;top:678px;width:33px;height:33px;border-radius:7px;background:#0e71eb"></div>
<svg style="left:1240px;top:678px" width="33" height="33" viewBox="0 0 33 33"><g fill="none" stroke="#fff" stroke-width="1.8" stroke-linejoin="round"><rect x="6.5" y="7.5" width="20" height="18" rx="3"/><path d="M8 24L13 15L17 20L20 17L25 24"/><circle cx="12" cy="11.5" r="1.6"/></g></svg>
<div class="a" style="left:1240px;top:758px;width:33px;height:33px;border-radius:7px;background:#0e71eb"></div>
<svg style="left:1240px;top:758px" width="33" height="33" viewBox="0 0 33 33"><circle cx="16.5" cy="16.5" r="10" fill="none" stroke="#fff" stroke-width="1.8"/><path d="M10.5 13.5H13.5L15 11.5H18L19.5 13.5H22.5V21.5H10.5Z" fill="#fff"/><circle cx="16.5" cy="17.5" r="2.6" fill="#0e71eb"/><circle cx="16" cy="17" r="1.2" fill="#fff"/></svg>
<div class="a" style="left:1288px;top:515px;font-size:13px;color:#2a2a33;white-space:nowrap">Timer</div>
<div class="a" style="left:1289px;top:540px;font-size:11px;color:#8a8a94;white-space:nowrap">Keep control of your workday with the...</div>
<div class="a" style="left:1288px;top:595px;font-size:13px;color:#2a2a33;white-space:nowrap">Music</div>
<div class="a" style="left:1289px;top:620px;font-size:11px;color:#8a8a94;white-space:nowrap">Play music in your meetings</div>
<div class="a" style="left:1288px;top:675px;font-size:13px;color:#2a2a33;white-space:nowrap">Virtual Backgrounds</div>
<div class="a" style="left:1289px;top:700px;font-size:11px;color:#8a8a94;white-space:nowrap">Discover the perfect virtual backgroun...</div>
<div class="a" style="left:1288px;top:755px;font-size:13px;color:#2a2a33;white-space:nowrap">Group Photo</div>
<div class="a" style="left:1289px;top:780px;font-size:11px;color:#8a8a94;white-space:nowrap">Take instant high-quality group photos</div>
<div class="a" style="left:1289px;top:569px;width:226px;height:1px;background:#f0f0f2"></div>
<div class="a" style="left:1289px;top:649px;width:226px;height:1px;background:#f0f0f2"></div>
<div class="a" style="left:1289px;top:729px;width:226px;height:1px;background:#f0f0f2"></div>
<div class="a" style="left:1289px;top:809px;width:226px;height:1px;background:#f0f0f2"></div>

<!-- TASKBAR -->
<div id="taskbar" class="a"></div>
<svg style="left:15px;top:931px" width="18" height="18" viewBox="0 0 18 18"><g fill="#111"><rect x="1" y="1.5" width="7.3" height="7"/><rect x="9.3" y="0.5" width="7.7" height="8"/><rect x="1" y="9.5" width="7.3" height="7"/><rect x="9.3" y="9.5" width="7.7" height="8"/></g></svg>
<div class="a" style="left:49px;top:920px;width:287px;height:40px;background:#fff;overflow:hidden">
  <svg style="left:0;top:0" width="287" height="40" viewBox="0 0 287 40">
   <path d="M210 40C225 32 240 22 255 14C265 9 275 6 287 4V40Z" fill="#d8a47c"/>
   <path d="M222 40C235 33 250 26 262 20C270 16 278 14 287 13V40Z" fill="#c28a62"/>
   <path d="M238 40C248 35 258 30 268 27C275 25 281 24 287 24V40Z" fill="#e6c2a0"/>
   <g fill="none" stroke="#a86e48" stroke-width="1.6" opacity=".75">
    <path d="M232 31C245 27 258 20 270 14M240 36C252 32 264 26 278 20M252 39C262 36 272 32 286 28M262 20C270 17 278 14 287 12"/>
   </g>
  </svg>
</div>

<svg style="left:60px;top:930px" width="20" height="20" viewBox="0 0 20 20"><g fill="none" stroke="#222" stroke-width="1.4"><circle cx="12" cy="7.5" r="5"/><path d="M8.5 11L2.5 17"/></g></svg>
<div class="a" style="left:88px;top:931px;font-size:15px;color:#333">Поиск</div>
<!-- taskbar apps -->
<svg style="left:340px;top:920px" width="450" height="40" viewBox="0 0 450 40">
 <path d="M12 12H20L22 14H32V29H12Z" fill="#f4c64a"/><path d="M12 16H32V29H12Z" fill="#fbd46a"/><path d="M17 22H27V29H24V25H20V29H17Z" fill="#2d8fe0"/>
 <rect x="3" y="37" width="41" height="3" fill="#3d8ee0"/>
 <defs><linearGradient id="edg" x1="0" y1="0" x2="0" y2="1"><stop offset="0" stop-color="#2fb3ee"/><stop offset=".6" stop-color="#1a7fd4"/><stop offset="1" stop-color="#0f5aa8"/></linearGradient></defs>
 <circle cx="72" cy="20" r="11" fill="url(#edg)"/>
 <path d="M61.5 22C62 14 68 10 74 10C80 10 83.5 14 83.5 18C83.5 21 81 22.5 78 22.5H70C70 25 72.5 27.5 76 27.5C78 27.5 80 27 81.5 26C79.5 29.5 76 31 72 31C66 31 61.5 27 61.5 22Z" fill="#50d98a" opacity=".55"/>
 <path d="M66 20.5C66 16 69 13.5 73 13.5C76.5 13.5 78.5 15.5 78.5 18H69.5C68 18 66.5 19 66 20.5Z" fill="#fff" opacity=".85"/>
 <circle cx="122" cy="20" r="11" fill="#ffd21e"/><path d="M113 25L118 15L121 22L125 14L127 21L131 15" fill="none" stroke="#111" stroke-width="3" stroke-linejoin="round"/>
 <circle cx="172" cy="20" r="11" fill="#fc3f1d"/><path d="M174 27V13H171.5C168.5 13 167 15 167 17.5C167 20 168.5 21.5 171 21.5L167 27" fill="none" stroke="#fff" stroke-width="2.2"/>
 <circle cx="221" cy="20" r="11" fill="#db4437"/><path d="M221 20L211.5 14.5A11 11 0 0 1 230.5 14.5Z" fill="#db4437"/><path d="M210.5 15A11 11 0 0 0 216 29.5L221 20Z" fill="#0f9d58"/><path d="M216 29.5A11 11 0 0 0 232 17L221 20Z" fill="#f4b400"/><circle cx="221" cy="20" r="5" fill="#fff"/><circle cx="221" cy="20" r="4" fill="#4285f4"/>
 <circle cx="271" cy="20" r="11" fill="#db4437"/><path d="M260.5 15A11 11 0 0 0 266 29.5L271 20Z" fill="#0f9d58"/><path d="M266 29.5A11 11 0 0 0 282 17L271 20Z" fill="#f4b400"/><circle cx="271" cy="20" r="5" fill="#fff"/><circle cx="271" cy="20" r="4" fill="#4285f4"/><circle cx="278" cy="26" r="6" fill="#4c9a3c"/><text x="278" y="29" font-size="8" fill="#fff" text-anchor="middle" font-family="Liberation Sans">G</text>
 <rect x="251" y="37" width="41" height="3" fill="#3d8ee0"/>
 <circle cx="320" cy="20" r="11.5" fill="#1a6ff2"/><text x="320" y="22" font-size="6.5" fill="#fff" text-anchor="middle" font-family="Liberation Sans">zoom</text>
 <rect x="300" y="37" width="41" height="3" fill="#3d8ee0"/>
 <circle cx="370" cy="20" r="11" fill="#f3f1ee"/><path d="M365 13L370 21L375 13M370 21V28" fill="none" stroke="#e3162a" stroke-width="2.6"/>
 <rect x="350" y="37" width="41" height="3" fill="#3d8ee0"/>
 <rect x="408" y="9" width="24" height="23" fill="#1e3f79"/><path d="M413 16L417 24L420 18L423 24L427 16" fill="none" stroke="#6fb0f5" stroke-width="1.6"/><rect x="424" y="24" width="7" height="7" fill="#5aa4f0"/>
 <rect x="400" y="37" width="41" height="3" fill="#3d8ee0"/>
</svg>
<!-- tray -->
<svg style="left:1256px;top:920px" width="280" height="40" viewBox="0 0 280 40">
 <path d="M8 23L14 17L20 23" fill="none" stroke="#222" stroke-width="1.4"/>
 <rect x="35" y="13" width="6" height="12" rx="3" fill="#111"/><path d="M33 21A5 5 0 0 0 43 21M38 26V29M35 29H41" fill="none" stroke="#111" stroke-width="1.3"/>
 <path d="M58 28A12 12 0 0 1 70 16M61.5 28A8.5 8.5 0 0 1 70 19.5M65 28A5 5 0 0 1 70 23" fill="none" stroke="#333" stroke-width="1.2"/><circle cx="70" cy="27" r="1.2" fill="#111"/>
 <rect x="79" y="18" width="14" height="8" fill="#111"/><rect x="93" y="20" width="1.5" height="4" fill="#111"/><path d="M81 15V18M85 15V18" stroke="#111" stroke-width="1.2"/>
 <path d="M102 18H105L109 14.5V26.5L105 23H102Z M112 17.5A4 4 0 0 1 112 23.5M114.5 15.5A7 7 0 0 1 114.5 25.5" fill="none" stroke="#222" stroke-width="1.2"/>
 <text x="129" y="25" font-size="12" fill="#222" font-family="Liberation Sans">ENG</text>
 <text x="192" y="15" font-size="11.5" fill="#222" text-anchor="middle" font-family="Liberation Sans">9:46</text>
 <text x="192" y="33" font-size="11.5" fill="#222" text-anchor="middle" font-family="Liberation Sans">05.12.2023</text>
 <path d="M238 13H254V25H244L240 28V25H238Z" fill="#111"/><path d="M241 17H251M241 20H251M241 23H248" stroke="#fff" stroke-width="1"/>
 <circle cx="257" cy="29" r="6.5" fill="#e8e6e1" stroke="#888" stroke-width="1"/><text x="257" y="33" font-size="10" fill="#111" text-anchor="middle" font-family="Liberation Sans">3</text>
</svg>
<!-- POPUP -->
<div class="a" style="left:1227px;top:815px;width:300px;height:86px;border-radius:9px;background:#1c1e23"></div>
<div class="a" style="left:1243px;top:828px;font-size:14px;color:#fff;white-space:nowrap">Are you satisfied with Zoom Apps?</div>
<svg style="left:1490px;top:828px" width="18" height="18" viewBox="0 0 18 18"><path d="M4 4L14 14M14 4L4 14" stroke="#fff" stroke-width="1.4"/></svg>
<div class="a" style="left:1243px;top:867px;width:130px;height:24px;border-radius:5px;background:#0e71eb;color:#fff;font-weight:bold;font-size:14px;text-align:center;line-height:24px">No</div>
<div class="a" style="left:1381px;top:867px;width:130px;height:24px;border-radius:5px;background:#0e71eb;color:#fff;font-weight:bold;font-size:14px;text-align:center;line-height:24px">Yes</div>
<!-- WATERMARK -->
<div class="a" style="left:1137px;top:812px;font-size:20px;color:rgba(205,205,205,.55);white-space:nowrap">Активация Windows</div>
<div class="a" style="left:1137px;top:838px;font-size:14.2px;color:rgba(205,205,205,.55);white-space:nowrap;line-height:20px">Чтобы активировать Windows, перейдите в раздел<br>"Параметры".</div>
</body></html>
